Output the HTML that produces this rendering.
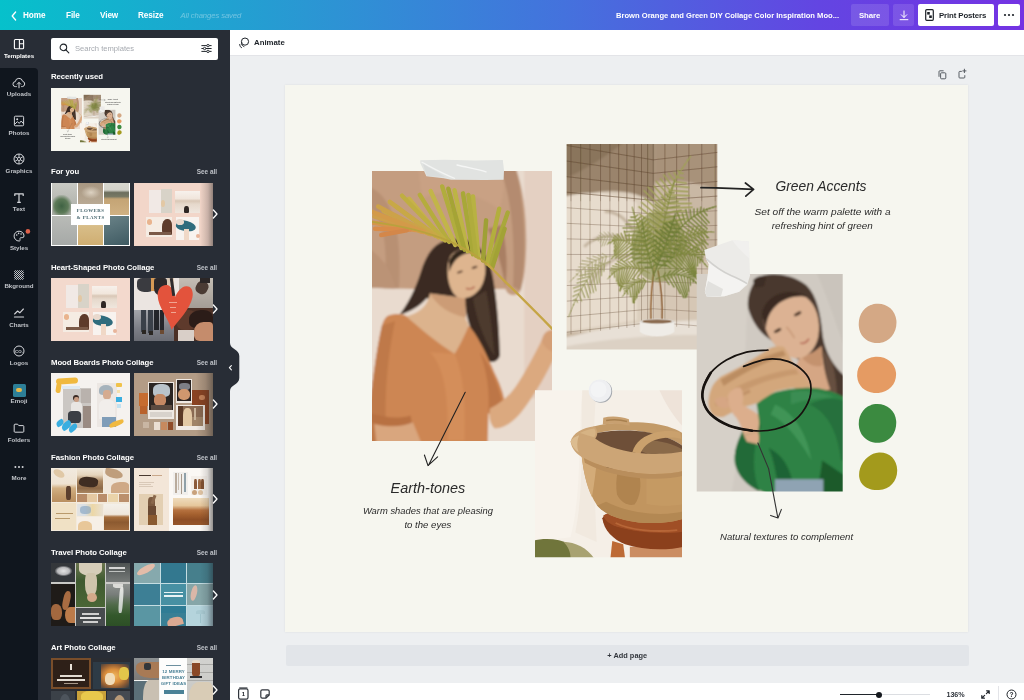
<!DOCTYPE html>
<html>
<head>
<meta charset="utf-8">
<title>Canva editor</title>
<style>
*{box-sizing:border-box;margin:0;padding:0}
html,body{width:1024px;height:700px;overflow:hidden;background:#edeff1;font-family:"Liberation Sans",sans-serif;}
.abs{position:absolute}
#hdr,#rail,#panel,#tool,#bot,#addp{will-change:transform}
#hdr{position:absolute;left:0;top:0;width:1024px;height:29.5px;background:linear-gradient(90deg,#06c1cb 0%,#2a97d3 30%,#4472dd 55%,#6345e2 80%,#7433e3 100%);}
#hdr .m{position:absolute;top:10px;font-size:8.2px;font-weight:bold;color:#fff;line-height:11px;white-space:nowrap;letter-spacing:-0.1px}
#rail{position:absolute;left:0;top:30px;width:38px;height:670px;background:#10161e;}
#rail .tab{position:absolute;left:0;width:38px;height:38px;text-align:center;}
#rail .lbl{position:absolute;left:-6px;width:50px;text-align:center;font-size:6.2px;font-weight:bold;color:#c3c6cb;line-height:8px;white-space:nowrap}
#rail svg{position:absolute;left:12px;width:14px;height:14px;overflow:visible}
#panel{position:absolute;left:38px;top:30px;width:192px;height:670px;background:#282d36;overflow:hidden}
.sect{position:absolute;left:13px;font-size:7.75px;font-weight:bold;color:#fff;line-height:10px;white-space:nowrap;letter-spacing:-0.05px}
.see{position:absolute;right:13px;font-size:6.4px;font-weight:bold;color:#bfc2c8;line-height:10px;white-space:nowrap}
.th{position:absolute;width:79px;height:63px;overflow:hidden;background:#ccc}
.th i{position:absolute;display:block}
.chev{position:absolute;left:172.8px;width:8px;height:10px}
#tool{position:absolute;left:230px;top:29.5px;width:794px;height:25.5px;background:#fff;border-bottom:1px solid #e3e4e8}
#page{position:absolute;left:285px;top:85px;width:683px;height:547px;background:#f6f6ef;box-shadow:0 0 2px rgba(0,0,0,.08)}
#addp{position:absolute;left:286px;top:645px;width:682.5px;height:20.6px;background:#e2e5e9;border-radius:2px;font-size:7.4px;font-weight:bold;color:#33373d;text-align:center;line-height:21.6px}
#bot{position:absolute;left:230px;top:682.5px;width:794px;height:17.5px;background:#fff;}
.hand{position:absolute;font-family:"Liberation Sans",sans-serif;font-style:italic;color:#2b2b2b;white-space:nowrap;text-align:center}
</style>
</head>
<body>
<svg width="0" height="0" style="position:absolute">
<defs>
<filter id="b1" x="-5%" y="-5%" width="110%" height="110%"><feGaussianBlur stdDeviation="1.1"/></filter>
<filter id="b2" x="-10%" y="-10%" width="120%" height="120%"><feGaussianBlur stdDeviation="2.2"/></filter>
<filter id="b3" x="-5%" y="-5%" width="110%" height="110%"><feGaussianBlur stdDeviation="3"/></filter>
<filter id="b1z" x="-5%" y="-5%" width="110%" height="110%"><feGaussianBlur stdDeviation="1.6"/></filter>
<filter id="b05" x="-5%" y="-5%" width="110%" height="110%"><feGaussianBlur stdDeviation=".45"/></filter>
<clipPath id="c1"><rect width="180" height="270"/></clipPath>
<clipPath id="ctop"><rect x="-5" y="-5" width="530" height="200"/></clipPath>
<clipPath id="c2"><rect width="150.7" height="205.6"/></clipPath>
<clipPath id="c3"><rect width="147" height="167"/></clipPath>
<clipPath id="c4"><rect width="146" height="217.4"/></clipPath>
<pattern id="tiles" width="9.2" height="9.2" patternUnits="userSpaceOnUse"><path d="M0 .5 H9.2 M.5 0 V9.2" stroke="#6e5643" stroke-width=".8" opacity=".75"/></pattern>
<pattern id="tilesR" width="7.2" height="9.2" patternUnits="userSpaceOnUse"><path d="M0 .5 H7.2 M.5 0 V9.2" stroke="#6e5643" stroke-width=".8" opacity=".7"/></pattern>
<pattern id="tilesZ" width="36" height="36" patternUnits="userSpaceOnUse"><path d="M0 8 H36 M20 0 V36" stroke="#6e5744" stroke-width="2.2" opacity=".75"/></pattern>
<pattern id="tilesZR" width="27" height="36" patternUnits="userSpaceOnUse"><path d="M0 8 H27 M10 0 V36" stroke="#6e5744" stroke-width="2.1" opacity=".7"/></pattern>
<symbol id="art" viewBox="0 0 683 547" overflow="visible">
<!--P2-->
<g transform="translate(281.6,59)" clip-path="url(#c2)">
<g transform="scale(.2926,.2937)">
<g filter="url(#b3)">
<rect x="-10" y="-10" width="540" height="720" fill="#c9b8a4"/>
<path d="M-10 -10 H300 V640 H-10Z" fill="#dccfbe"/>
<path d="M-10 -10 H300 V200 C220 150 120 150 -10 190Z" fill="#9a846c"/>
<path d="M-10 -10 H200 C140 40 60 90 -10 120Z" fill="#8a745c"/>
<path d="M-10 180 C60 160 150 160 240 200 L240 600 L-10 640Z" fill="#e7dccd"/>
<path d="M300 -10 H530 V160 C450 130 370 120 300 130Z" fill="#a8927a"/>
<path d="M300 400 H530 V620 H300Z" fill="#d6c7b5"/>
<path d="M-10 660 C80 640 180 615 250 610 L440 600 L530 600 V720 H-10Z" fill="#e8e0d6"/>
<path d="M-10 690 C100 670 250 650 440 650 L530 650 V720 H-10Z" fill="#dcd1c4"/>
<!-- wall shadows of fronds -->
<g stroke="#b9a892" stroke-width="10" fill="none" opacity=".8"><path d="M220 330 C160 300 100 310 60 350"/><path d="M220 380 C160 380 110 420 80 480"/><path d="M230 300 C200 250 170 230 130 230"/></g>
</g>
<g fill="none" stroke="#5f4732" stroke-width="2.6" filter="url(#b1z)"><path d="M0 5 L296 54 M0 58 L296 100 M0 111 L296 146 M0 164 L296 192 M0 217 L296 238 M0 270 L296 284 M0 323 L296 330 M0 376 L296 377 M0 429 L296 423 M0 482 L296 469 M0 535 L296 515 M0 588 L296 561 M0 641 L296 607 M15 -5 L15 648 M48 -5 L48 644 M80 -5 L80 641 M116 -5 L116 636 M148 -5 L148 632 M178 -5 L178 629 M206 -5 L206 626 M231 -5 L231 623 M256 -5 L256 620 M277 -5 L277 617 M296 -5 L296 615 " opacity=".44"/><path d="M296 54 L520 28 M296 100 L520 77 M296 146 L520 127 M296 192 L520 177 M296 238 L520 227 M296 284 L520 277 M296 330 L520 326 M296 377 L520 376 M296 423 L520 426 M296 469 L520 476 M296 515 L520 526 M296 561 L520 575 M296 607 L520 625 M336 -5 L336 618 M376 -5 L376 622 M418 -5 L418 626 M462 -5 L462 629 M508 -5 L508 633 " opacity=".4"/><path d="M0 5 L296 54 M0 58 L296 100 M0 111 L296 146 M0 164 L296 192 M0 217 L296 238 M0 270 L296 284 M0 323 L296 330 M0 376 L296 377 M0 429 L296 423 M0 482 L296 469 M0 535 L296 515 M0 588 L296 561 M0 641 L296 607 M15 -5 L15 648 M48 -5 L48 644 M80 -5 L80 641 M116 -5 L116 636 M148 -5 L148 632 M178 -5 L178 629 M206 -5 L206 626 M231 -5 L231 623 M256 -5 L256 620 M277 -5 L277 617 M296 -5 L296 615 " opacity=".35" clip-path="url(#ctop)"/><path d="M296 54 L520 28 M296 100 L520 77 M296 146 L520 127 M296 192 L520 177 M296 238 L520 227 M296 284 L520 277 M296 330 L520 326 M296 377 L520 376 M296 423 L520 426 M296 469 L520 476 M296 515 L520 526 M296 561 L520 575 M296 607 L520 625 M336 -5 L336 618 M376 -5 L376 622 M418 -5 L418 626 M462 -5 L462 629 M508 -5 L508 633 " opacity=".3" clip-path="url(#ctop)"/></g>
<g filter="url(#b1z)">
<path d="M288 600 C286 540 290 480 300 420" stroke="#96683c" stroke-width="5" fill="none"/>
<path d="M326 600 C328 540 322 480 312 430" stroke="#8c6038" stroke-width="5" fill="none"/>
<ellipse cx="315" cy="350" rx="95" ry="120" fill="#7e863c" opacity=".5"/>
<path d="M150 400 Q70 420 6 590" stroke="#9a9a60" stroke-width="2.8800000000000003" fill="none"/><path d="M129 408 L112 405" stroke="#9a9a60" stroke-width="3.6" stroke-linecap="round"/><path d="M129 408 L127 434" stroke="#9a9a60" stroke-width="3.6" stroke-linecap="round"/><path d="M119 414 L95 412" stroke="#9a9a60" stroke-width="3.6" stroke-linecap="round"/><path d="M119 414 L119 448" stroke="#9a9a60" stroke-width="3.6" stroke-linecap="round"/><path d="M108 421 L72 422" stroke="#9a9a60" stroke-width="3.6" stroke-linecap="round"/><path d="M108 421 L112 473" stroke="#9a9a60" stroke-width="3.6" stroke-linecap="round"/><path d="M98 430 L65 434" stroke="#9a9a60" stroke-width="3.6" stroke-linecap="round"/><path d="M98 430 L105 476" stroke="#9a9a60" stroke-width="3.6" stroke-linecap="round"/><path d="M89 440 L44 448" stroke="#9a9a60" stroke-width="3.6" stroke-linecap="round"/><path d="M89 440 L100 499" stroke="#9a9a60" stroke-width="3.6" stroke-linecap="round"/><path d="M79 451 L37 461" stroke="#9a9a60" stroke-width="3.6" stroke-linecap="round"/><path d="M79 451 L92 506" stroke="#9a9a60" stroke-width="3.6" stroke-linecap="round"/><path d="M69 464 L35 474" stroke="#9a9a60" stroke-width="3.6" stroke-linecap="round"/><path d="M69 464 L82 508" stroke="#9a9a60" stroke-width="3.6" stroke-linecap="round"/><path d="M60 478 L23 491" stroke="#9a9a60" stroke-width="3.6" stroke-linecap="round"/><path d="M60 478 L75 524" stroke="#9a9a60" stroke-width="3.6" stroke-linecap="round"/><path d="M50 493 L26 503" stroke="#9a9a60" stroke-width="3.6" stroke-linecap="round"/><path d="M50 493 L62 523" stroke="#9a9a60" stroke-width="3.6" stroke-linecap="round"/><path d="M41 510 L21 519" stroke="#9a9a60" stroke-width="3.6" stroke-linecap="round"/><path d="M41 510 L51 535" stroke="#9a9a60" stroke-width="3.6" stroke-linecap="round"/><path d="M32 528 L23 532" stroke="#9a9a60" stroke-width="3.6" stroke-linecap="round"/><path d="M32 528 L37 539" stroke="#9a9a60" stroke-width="3.6" stroke-linecap="round"/><path d="M23 547 L23 548" stroke="#9a9a60" stroke-width="3.6" stroke-linecap="round"/><path d="M23 547 L24 548" stroke="#9a9a60" stroke-width="3.6" stroke-linecap="round"/><path d="M15 568 L15 568" stroke="#9a9a60" stroke-width="3.6" stroke-linecap="round"/><path d="M15 568 L15 568" stroke="#9a9a60" stroke-width="3.6" stroke-linecap="round"/><path d="M160 380 Q90 380 10 470" stroke="#a6a072" stroke-width="2.5600000000000005" fill="none"/><path d="M136 382 L121 373" stroke="#a6a072" stroke-width="3.2" stroke-linecap="round"/><path d="M136 382 L128 410" stroke="#a6a072" stroke-width="3.2" stroke-linecap="round"/><path d="M124 386 L107 378" stroke="#a6a072" stroke-width="3.2" stroke-linecap="round"/><path d="M124 386 L118 415" stroke="#a6a072" stroke-width="3.2" stroke-linecap="round"/><path d="M112 390 L89 382" stroke="#a6a072" stroke-width="3.2" stroke-linecap="round"/><path d="M112 390 L107 427" stroke="#a6a072" stroke-width="3.2" stroke-linecap="round"/><path d="M100 396 L69 388" stroke="#a6a072" stroke-width="3.2" stroke-linecap="round"/><path d="M100 396 L96 442" stroke="#a6a072" stroke-width="3.2" stroke-linecap="round"/><path d="M88 402 L52 397" stroke="#a6a072" stroke-width="3.2" stroke-linecap="round"/><path d="M88 402 L86 454" stroke="#a6a072" stroke-width="3.2" stroke-linecap="round"/><path d="M75 411 L47 408" stroke="#a6a072" stroke-width="3.2" stroke-linecap="round"/><path d="M75 411 L76 450" stroke="#a6a072" stroke-width="3.2" stroke-linecap="round"/><path d="M62 420 L41 419" stroke="#a6a072" stroke-width="3.2" stroke-linecap="round"/><path d="M62 420 L64 449" stroke="#a6a072" stroke-width="3.2" stroke-linecap="round"/><path d="M49 431 L33 431" stroke="#a6a072" stroke-width="3.2" stroke-linecap="round"/><path d="M49 431 L52 453" stroke="#a6a072" stroke-width="3.2" stroke-linecap="round"/><path d="M36 442 L33 443" stroke="#a6a072" stroke-width="3.2" stroke-linecap="round"/><path d="M36 442 L37 447" stroke="#a6a072" stroke-width="3.2" stroke-linecap="round"/><path d="M23 456 L23 456" stroke="#a6a072" stroke-width="3.2" stroke-linecap="round"/><path d="M23 456 L23 456" stroke="#a6a072" stroke-width="3.2" stroke-linecap="round"/><path d="M200 330 Q140 300 90 330" stroke="#a9a47a" stroke-width="2.4000000000000004" fill="none"/><path d="M176 320 L171 308" stroke="#a9a47a" stroke-width="3" stroke-linecap="round"/><path d="M176 320 L162 338" stroke="#a9a47a" stroke-width="3" stroke-linecap="round"/><path d="M165 317 L157 303" stroke="#a9a47a" stroke-width="3" stroke-linecap="round"/><path d="M165 317 L149 341" stroke="#a9a47a" stroke-width="3" stroke-linecap="round"/><path d="M154 316 L142 300" stroke="#a9a47a" stroke-width="3" stroke-linecap="round"/><path d="M154 316 L138 343" stroke="#a9a47a" stroke-width="3" stroke-linecap="round"/><path d="M142 315 L128 300" stroke="#a9a47a" stroke-width="3" stroke-linecap="round"/><path d="M142 315 L128 346" stroke="#a9a47a" stroke-width="3" stroke-linecap="round"/><path d="M132 316 L114 302" stroke="#a9a47a" stroke-width="3" stroke-linecap="round"/><path d="M132 316 L119 349" stroke="#a9a47a" stroke-width="3" stroke-linecap="round"/><path d="M121 317 L110 311" stroke="#a9a47a" stroke-width="3" stroke-linecap="round"/><path d="M121 317 L116 336" stroke="#a9a47a" stroke-width="3" stroke-linecap="round"/><path d="M110 320 L104 318" stroke="#a9a47a" stroke-width="3" stroke-linecap="round"/><path d="M110 320 L109 330" stroke="#a9a47a" stroke-width="3" stroke-linecap="round"/><path d="M100 325 L100 325" stroke="#a9a47a" stroke-width="3" stroke-linecap="round"/><path d="M100 325 L100 325" stroke="#a9a47a" stroke-width="3" stroke-linecap="round"/><path d="M300 430 Q290 220 425 40" stroke="#a0a05a" stroke-width="4.0" fill="none"/><path d="M299 397 L322 388" stroke="#a0a05a" stroke-width="5" stroke-linecap="round"/><path d="M299 397 L277 387" stroke="#a0a05a" stroke-width="5" stroke-linecap="round"/><path d="M300 380 L335 367" stroke="#a0a05a" stroke-width="5" stroke-linecap="round"/><path d="M300 380 L266 364" stroke="#a0a05a" stroke-width="5" stroke-linecap="round"/><path d="M301 364 L339 351" stroke="#a0a05a" stroke-width="5" stroke-linecap="round"/><path d="M301 364 L265 346" stroke="#a0a05a" stroke-width="5" stroke-linecap="round"/><path d="M302 347 L349 333" stroke="#a0a05a" stroke-width="5" stroke-linecap="round"/><path d="M302 347 L260 325" stroke="#a0a05a" stroke-width="5" stroke-linecap="round"/><path d="M304 331 L362 315" stroke="#a0a05a" stroke-width="5" stroke-linecap="round"/><path d="M304 331 L253 302" stroke="#a0a05a" stroke-width="5" stroke-linecap="round"/><path d="M306 315 L386 296" stroke="#a0a05a" stroke-width="5" stroke-linecap="round"/><path d="M306 315 L240 274" stroke="#a0a05a" stroke-width="5" stroke-linecap="round"/><path d="M308 299 L388 283" stroke="#a0a05a" stroke-width="5" stroke-linecap="round"/><path d="M308 299 L245 257" stroke="#a0a05a" stroke-width="5" stroke-linecap="round"/><path d="M312 283 L393 269" stroke="#a0a05a" stroke-width="5" stroke-linecap="round"/><path d="M312 283 L250 239" stroke="#a0a05a" stroke-width="5" stroke-linecap="round"/><path d="M315 267 L409 254" stroke="#a0a05a" stroke-width="5" stroke-linecap="round"/><path d="M315 267 L247 214" stroke="#a0a05a" stroke-width="5" stroke-linecap="round"/><path d="M319 251 L410 241" stroke="#a0a05a" stroke-width="5" stroke-linecap="round"/><path d="M319 251 L256 199" stroke="#a0a05a" stroke-width="5" stroke-linecap="round"/><path d="M324 235 L409 228" stroke="#a0a05a" stroke-width="5" stroke-linecap="round"/><path d="M324 235 L267 185" stroke="#a0a05a" stroke-width="5" stroke-linecap="round"/><path d="M329 220 L429 215" stroke="#a0a05a" stroke-width="5" stroke-linecap="round"/><path d="M329 220 L264 159" stroke="#a0a05a" stroke-width="5" stroke-linecap="round"/><path d="M334 204 L426 202" stroke="#a0a05a" stroke-width="5" stroke-linecap="round"/><path d="M334 204 L278 147" stroke="#a0a05a" stroke-width="5" stroke-linecap="round"/><path d="M340 189 L411 189" stroke="#a0a05a" stroke-width="5" stroke-linecap="round"/><path d="M340 189 L299 144" stroke="#a0a05a" stroke-width="5" stroke-linecap="round"/><path d="M347 173 L419 176" stroke="#a0a05a" stroke-width="5" stroke-linecap="round"/><path d="M347 173 L306 127" stroke="#a0a05a" stroke-width="5" stroke-linecap="round"/><path d="M353 158 L415 162" stroke="#a0a05a" stroke-width="5" stroke-linecap="round"/><path d="M353 158 L320 118" stroke="#a0a05a" stroke-width="5" stroke-linecap="round"/><path d="M361 143 L418 148" stroke="#a0a05a" stroke-width="5" stroke-linecap="round"/><path d="M361 143 L332 105" stroke="#a0a05a" stroke-width="5" stroke-linecap="round"/><path d="M369 128 L409 133" stroke="#a0a05a" stroke-width="5" stroke-linecap="round"/><path d="M369 128 L349 100" stroke="#a0a05a" stroke-width="5" stroke-linecap="round"/><path d="M377 113 L399 116" stroke="#a0a05a" stroke-width="5" stroke-linecap="round"/><path d="M377 113 L367 98" stroke="#a0a05a" stroke-width="5" stroke-linecap="round"/><path d="M386 98 L398 100" stroke="#a0a05a" stroke-width="5" stroke-linecap="round"/><path d="M386 98 L380 90" stroke="#a0a05a" stroke-width="5" stroke-linecap="round"/><path d="M395 84 L395 84" stroke="#a0a05a" stroke-width="5" stroke-linecap="round"/><path d="M395 84 L395 84" stroke="#a0a05a" stroke-width="5" stroke-linecap="round"/><path d="M404 69 L404 69" stroke="#a0a05a" stroke-width="5" stroke-linecap="round"/><path d="M404 69 L404 69" stroke="#a0a05a" stroke-width="5" stroke-linecap="round"/><path d="M414 54 L414 54" stroke="#a0a05a" stroke-width="5" stroke-linecap="round"/><path d="M414 54 L414 54" stroke="#a0a05a" stroke-width="5" stroke-linecap="round"/><path d="M305 420 Q330 250 370 120" stroke="#878c44" stroke-width="3.5200000000000005" fill="none"/><path d="M311 381 L331 376" stroke="#878c44" stroke-width="4.4" stroke-linecap="round"/><path d="M311 381 L295 370" stroke="#878c44" stroke-width="4.4" stroke-linecap="round"/><path d="M314 361 L347 354" stroke="#878c44" stroke-width="4.4" stroke-linecap="round"/><path d="M314 361 L288 344" stroke="#878c44" stroke-width="4.4" stroke-linecap="round"/><path d="M318 342 L352 335" stroke="#878c44" stroke-width="4.4" stroke-linecap="round"/><path d="M318 342 L290 324" stroke="#878c44" stroke-width="4.4" stroke-linecap="round"/><path d="M321 323 L373 313" stroke="#878c44" stroke-width="4.4" stroke-linecap="round"/><path d="M321 323 L280 296" stroke="#878c44" stroke-width="4.4" stroke-linecap="round"/><path d="M325 305 L384 294" stroke="#878c44" stroke-width="4.4" stroke-linecap="round"/><path d="M325 305 L278 273" stroke="#878c44" stroke-width="4.4" stroke-linecap="round"/><path d="M328 287 L386 276" stroke="#878c44" stroke-width="4.4" stroke-linecap="round"/><path d="M328 287 L284 256" stroke="#878c44" stroke-width="4.4" stroke-linecap="round"/><path d="M332 269 L397 258" stroke="#878c44" stroke-width="4.4" stroke-linecap="round"/><path d="M332 269 L283 234" stroke="#878c44" stroke-width="4.4" stroke-linecap="round"/><path d="M336 251 L385 243" stroke="#878c44" stroke-width="4.4" stroke-linecap="round"/><path d="M336 251 L298 224" stroke="#878c44" stroke-width="4.4" stroke-linecap="round"/><path d="M340 234 L392 226" stroke="#878c44" stroke-width="4.4" stroke-linecap="round"/><path d="M340 234 L301 205" stroke="#878c44" stroke-width="4.4" stroke-linecap="round"/><path d="M344 217 L386 211" stroke="#878c44" stroke-width="4.4" stroke-linecap="round"/><path d="M344 217 L312 193" stroke="#878c44" stroke-width="4.4" stroke-linecap="round"/><path d="M348 200 L381 196" stroke="#878c44" stroke-width="4.4" stroke-linecap="round"/><path d="M348 200 L324 181" stroke="#878c44" stroke-width="4.4" stroke-linecap="round"/><path d="M352 183 L373 181" stroke="#878c44" stroke-width="4.4" stroke-linecap="round"/><path d="M352 183 L337 171" stroke="#878c44" stroke-width="4.4" stroke-linecap="round"/><path d="M356 167 L367 166" stroke="#878c44" stroke-width="4.4" stroke-linecap="round"/><path d="M356 167 L349 161" stroke="#878c44" stroke-width="4.4" stroke-linecap="round"/><path d="M361 151 L361 151" stroke="#878c44" stroke-width="4.4" stroke-linecap="round"/><path d="M361 151 L361 151" stroke="#878c44" stroke-width="4.4" stroke-linecap="round"/><path d="M365 135 L365 135" stroke="#878c44" stroke-width="4.4" stroke-linecap="round"/><path d="M365 135 L365 135" stroke="#878c44" stroke-width="4.4" stroke-linecap="round"/><path d="M310 400 Q390 240 512 212" stroke="#7a8440" stroke-width="3.6799999999999997" fill="none"/><path d="M326 371 L356 384" stroke="#7a8440" stroke-width="4.6" stroke-linecap="round"/><path d="M326 371 L312 359" stroke="#7a8440" stroke-width="4.6" stroke-linecap="round"/><path d="M334 357 L368 373" stroke="#7a8440" stroke-width="4.6" stroke-linecap="round"/><path d="M334 357 L319 343" stroke="#7a8440" stroke-width="4.6" stroke-linecap="round"/><path d="M342 344 L400 373" stroke="#7a8440" stroke-width="4.6" stroke-linecap="round"/><path d="M342 344 L318 319" stroke="#7a8440" stroke-width="4.6" stroke-linecap="round"/><path d="M350 331 L419 367" stroke="#7a8440" stroke-width="4.6" stroke-linecap="round"/><path d="M350 331 L325 302" stroke="#7a8440" stroke-width="4.6" stroke-linecap="round"/><path d="M359 319 L446 369" stroke="#7a8440" stroke-width="4.6" stroke-linecap="round"/><path d="M359 319 L329 280" stroke="#7a8440" stroke-width="4.6" stroke-linecap="round"/><path d="M368 308 L457 362" stroke="#7a8440" stroke-width="4.6" stroke-linecap="round"/><path d="M368 308 L340 267" stroke="#7a8440" stroke-width="4.6" stroke-linecap="round"/><path d="M377 297 L453 346" stroke="#7a8440" stroke-width="4.6" stroke-linecap="round"/><path d="M377 297 L356 262" stroke="#7a8440" stroke-width="4.6" stroke-linecap="round"/><path d="M386 287 L466 342" stroke="#7a8440" stroke-width="4.6" stroke-linecap="round"/><path d="M386 287 L367 248" stroke="#7a8440" stroke-width="4.6" stroke-linecap="round"/><path d="M396 278 L483 342" stroke="#7a8440" stroke-width="4.6" stroke-linecap="round"/><path d="M396 278 L378 234" stroke="#7a8440" stroke-width="4.6" stroke-linecap="round"/><path d="M405 269 L468 318" stroke="#7a8440" stroke-width="4.6" stroke-linecap="round"/><path d="M405 269 L395 236" stroke="#7a8440" stroke-width="4.6" stroke-linecap="round"/><path d="M415 260 L485 319" stroke="#7a8440" stroke-width="4.6" stroke-linecap="round"/><path d="M415 260 L407 223" stroke="#7a8440" stroke-width="4.6" stroke-linecap="round"/><path d="M425 252 L479 302" stroke="#7a8440" stroke-width="4.6" stroke-linecap="round"/><path d="M425 252 L422 223" stroke="#7a8440" stroke-width="4.6" stroke-linecap="round"/><path d="M435 245 L480 288" stroke="#7a8440" stroke-width="4.6" stroke-linecap="round"/><path d="M435 245 L435 221" stroke="#7a8440" stroke-width="4.6" stroke-linecap="round"/><path d="M446 239 L479 274" stroke="#7a8440" stroke-width="4.6" stroke-linecap="round"/><path d="M446 239 L447 220" stroke="#7a8440" stroke-width="4.6" stroke-linecap="round"/><path d="M456 233 L487 268" stroke="#7a8440" stroke-width="4.6" stroke-linecap="round"/><path d="M456 233 L459 215" stroke="#7a8440" stroke-width="4.6" stroke-linecap="round"/><path d="M467 227 L480 243" stroke="#7a8440" stroke-width="4.6" stroke-linecap="round"/><path d="M467 227 L469 220" stroke="#7a8440" stroke-width="4.6" stroke-linecap="round"/><path d="M478 223 L481 226" stroke="#7a8440" stroke-width="4.6" stroke-linecap="round"/><path d="M478 223 L479 221" stroke="#7a8440" stroke-width="4.6" stroke-linecap="round"/><path d="M489 219 L489 219" stroke="#7a8440" stroke-width="4.6" stroke-linecap="round"/><path d="M489 219 L489 219" stroke="#7a8440" stroke-width="4.6" stroke-linecap="round"/><path d="M500 215 L500 215" stroke="#7a8440" stroke-width="4.6" stroke-linecap="round"/><path d="M500 215 L500 215" stroke="#7a8440" stroke-width="4.6" stroke-linecap="round"/><path d="M310 430 Q410 320 482 420" stroke="#7c863e" stroke-width="3.5200000000000005" fill="none"/><path d="M333 407 L355 423" stroke="#7c863e" stroke-width="4.4" stroke-linecap="round"/><path d="M333 407 L330 395" stroke="#7c863e" stroke-width="4.4" stroke-linecap="round"/><path d="M344 398 L381 428" stroke="#7c863e" stroke-width="4.4" stroke-linecap="round"/><path d="M344 398 L341 376" stroke="#7c863e" stroke-width="4.4" stroke-linecap="round"/><path d="M356 390 L402 434" stroke="#7c863e" stroke-width="4.4" stroke-linecap="round"/><path d="M356 390 L355 361" stroke="#7c863e" stroke-width="4.4" stroke-linecap="round"/><path d="M366 383 L425 446" stroke="#7c863e" stroke-width="4.4" stroke-linecap="round"/><path d="M366 383 L372 346" stroke="#7c863e" stroke-width="4.4" stroke-linecap="round"/><path d="M377 379 L436 452" stroke="#7c863e" stroke-width="4.4" stroke-linecap="round"/><path d="M377 379 L391 340" stroke="#7c863e" stroke-width="4.4" stroke-linecap="round"/><path d="M388 375 L444 460" stroke="#7c863e" stroke-width="4.4" stroke-linecap="round"/><path d="M388 375 L411 336" stroke="#7c863e" stroke-width="4.4" stroke-linecap="round"/><path d="M398 373 L437 446" stroke="#7c863e" stroke-width="4.4" stroke-linecap="round"/><path d="M398 373 L424 345" stroke="#7c863e" stroke-width="4.4" stroke-linecap="round"/><path d="M408 372 L440 451" stroke="#7c863e" stroke-width="4.4" stroke-linecap="round"/><path d="M408 372 L442 349" stroke="#7c863e" stroke-width="4.4" stroke-linecap="round"/><path d="M418 373 L440 446" stroke="#7c863e" stroke-width="4.4" stroke-linecap="round"/><path d="M418 373 L454 357" stroke="#7c863e" stroke-width="4.4" stroke-linecap="round"/><path d="M428 376 L442 454" stroke="#7c863e" stroke-width="4.4" stroke-linecap="round"/><path d="M428 376 L470 365" stroke="#7c863e" stroke-width="4.4" stroke-linecap="round"/><path d="M437 379 L443 443" stroke="#7c863e" stroke-width="4.4" stroke-linecap="round"/><path d="M437 379 L475 376" stroke="#7c863e" stroke-width="4.4" stroke-linecap="round"/><path d="M447 385 L447 415" stroke="#7c863e" stroke-width="4.4" stroke-linecap="round"/><path d="M447 385 L466 385" stroke="#7c863e" stroke-width="4.4" stroke-linecap="round"/><path d="M456 391 L455 405" stroke="#7c863e" stroke-width="4.4" stroke-linecap="round"/><path d="M456 391 L465 393" stroke="#7c863e" stroke-width="4.4" stroke-linecap="round"/><path d="M465 399 L465 399" stroke="#7c863e" stroke-width="4.4" stroke-linecap="round"/><path d="M465 399 L465 399" stroke="#7c863e" stroke-width="4.4" stroke-linecap="round"/><path d="M473 409 L473 409" stroke="#7c863e" stroke-width="4.4" stroke-linecap="round"/><path d="M473 409 L473 409" stroke="#7c863e" stroke-width="4.4" stroke-linecap="round"/><path d="M295 400 Q245 300 224 214" stroke="#878c46" stroke-width="3.5200000000000005" fill="none"/><path d="M282 374 L296 358" stroke="#878c46" stroke-width="4.4" stroke-linecap="round"/><path d="M282 374 L256 377" stroke="#878c46" stroke-width="4.4" stroke-linecap="round"/><path d="M276 361 L297 337" stroke="#878c46" stroke-width="4.4" stroke-linecap="round"/><path d="M276 361 L238 364" stroke="#878c46" stroke-width="4.4" stroke-linecap="round"/><path d="M270 348 L294 323" stroke="#878c46" stroke-width="4.4" stroke-linecap="round"/><path d="M270 348 L229 351" stroke="#878c46" stroke-width="4.4" stroke-linecap="round"/><path d="M265 335 L289 310" stroke="#878c46" stroke-width="4.4" stroke-linecap="round"/><path d="M265 335 L223 338" stroke="#878c46" stroke-width="4.4" stroke-linecap="round"/><path d="M260 322 L291 291" stroke="#878c46" stroke-width="4.4" stroke-linecap="round"/><path d="M260 322 L206 326" stroke="#878c46" stroke-width="4.4" stroke-linecap="round"/><path d="M255 310 L286 280" stroke="#878c46" stroke-width="4.4" stroke-linecap="round"/><path d="M255 310 L202 312" stroke="#878c46" stroke-width="4.4" stroke-linecap="round"/><path d="M250 297 L282 267" stroke="#878c46" stroke-width="4.4" stroke-linecap="round"/><path d="M250 297 L197 299" stroke="#878c46" stroke-width="4.4" stroke-linecap="round"/><path d="M245 285 L279 255" stroke="#878c46" stroke-width="4.4" stroke-linecap="round"/><path d="M245 285 L192 286" stroke="#878c46" stroke-width="4.4" stroke-linecap="round"/><path d="M241 273 L267 251" stroke="#878c46" stroke-width="4.4" stroke-linecap="round"/><path d="M241 273 L202 273" stroke="#878c46" stroke-width="4.4" stroke-linecap="round"/><path d="M237 261 L254 247" stroke="#878c46" stroke-width="4.4" stroke-linecap="round"/><path d="M237 261 L211 260" stroke="#878c46" stroke-width="4.4" stroke-linecap="round"/><path d="M234 249 L243 241" stroke="#878c46" stroke-width="4.4" stroke-linecap="round"/><path d="M234 249 L219 249" stroke="#878c46" stroke-width="4.4" stroke-linecap="round"/><path d="M230 237 L231 237" stroke="#878c46" stroke-width="4.4" stroke-linecap="round"/><path d="M230 237 L230 237" stroke="#878c46" stroke-width="4.4" stroke-linecap="round"/><path d="M227 226 L227 226" stroke="#878c46" stroke-width="4.4" stroke-linecap="round"/><path d="M227 226 L227 226" stroke="#878c46" stroke-width="4.4" stroke-linecap="round"/><path d="M290 420 Q205 290 140 340" stroke="#8e914c" stroke-width="3.3600000000000003" fill="none"/><path d="M270 392 L280 376" stroke="#8e914c" stroke-width="4.2" stroke-linecap="round"/><path d="M270 392 L240 406" stroke="#8e914c" stroke-width="4.2" stroke-linecap="round"/><path d="M261 380 L273 356" stroke="#8e914c" stroke-width="4.2" stroke-linecap="round"/><path d="M261 380 L219 401" stroke="#8e914c" stroke-width="4.2" stroke-linecap="round"/><path d="M251 369 L265 338" stroke="#8e914c" stroke-width="4.2" stroke-linecap="round"/><path d="M251 369 L198 399" stroke="#8e914c" stroke-width="4.2" stroke-linecap="round"/><path d="M242 359 L254 323" stroke="#8e914c" stroke-width="4.2" stroke-linecap="round"/><path d="M242 359 L182 397" stroke="#8e914c" stroke-width="4.2" stroke-linecap="round"/><path d="M232 351 L240 316" stroke="#8e914c" stroke-width="4.2" stroke-linecap="round"/><path d="M232 351 L177 390" stroke="#8e914c" stroke-width="4.2" stroke-linecap="round"/><path d="M223 343 L227 307" stroke="#8e914c" stroke-width="4.2" stroke-linecap="round"/><path d="M223 343 L167 389" stroke="#8e914c" stroke-width="4.2" stroke-linecap="round"/><path d="M214 338 L213 306" stroke="#8e914c" stroke-width="4.2" stroke-linecap="round"/><path d="M214 338 L167 381" stroke="#8e914c" stroke-width="4.2" stroke-linecap="round"/><path d="M206 333 L197 296" stroke="#8e914c" stroke-width="4.2" stroke-linecap="round"/><path d="M206 333 L153 391" stroke="#8e914c" stroke-width="4.2" stroke-linecap="round"/><path d="M197 329 L186 304" stroke="#8e914c" stroke-width="4.2" stroke-linecap="round"/><path d="M197 329 L163 374" stroke="#8e914c" stroke-width="4.2" stroke-linecap="round"/><path d="M188 327 L174 307" stroke="#8e914c" stroke-width="4.2" stroke-linecap="round"/><path d="M188 327 L163 369" stroke="#8e914c" stroke-width="4.2" stroke-linecap="round"/><path d="M180 326 L164 312" stroke="#8e914c" stroke-width="4.2" stroke-linecap="round"/><path d="M180 326 L162 364" stroke="#8e914c" stroke-width="4.2" stroke-linecap="round"/><path d="M172 326 L159 319" stroke="#8e914c" stroke-width="4.2" stroke-linecap="round"/><path d="M172 326 L163 352" stroke="#8e914c" stroke-width="4.2" stroke-linecap="round"/><path d="M164 328 L156 325" stroke="#8e914c" stroke-width="4.2" stroke-linecap="round"/><path d="M164 328 L161 341" stroke="#8e914c" stroke-width="4.2" stroke-linecap="round"/><path d="M156 331 L156 331" stroke="#8e914c" stroke-width="4.2" stroke-linecap="round"/><path d="M156 331 L156 331" stroke="#8e914c" stroke-width="4.2" stroke-linecap="round"/><path d="M148 335 L148 335" stroke="#8e914c" stroke-width="4.2" stroke-linecap="round"/><path d="M148 335 L148 335" stroke="#8e914c" stroke-width="4.2" stroke-linecap="round"/><path d="M285 440 Q195 390 140 460" stroke="#8c8f4a" stroke-width="3.3600000000000003" fill="none"/><path d="M262 429 L257 417" stroke="#8c8f4a" stroke-width="4.2" stroke-linecap="round"/><path d="M262 429 L243 452" stroke="#8c8f4a" stroke-width="4.2" stroke-linecap="round"/><path d="M250 425 L242 408" stroke="#8c8f4a" stroke-width="4.2" stroke-linecap="round"/><path d="M250 425 L226 459" stroke="#8c8f4a" stroke-width="4.2" stroke-linecap="round"/><path d="M239 422 L224 400" stroke="#8c8f4a" stroke-width="4.2" stroke-linecap="round"/><path d="M239 422 L208 472" stroke="#8c8f4a" stroke-width="4.2" stroke-linecap="round"/><path d="M229 420 L210 400" stroke="#8c8f4a" stroke-width="4.2" stroke-linecap="round"/><path d="M229 420 L201 472" stroke="#8c8f4a" stroke-width="4.2" stroke-linecap="round"/><path d="M219 419 L185 393" stroke="#8c8f4a" stroke-width="4.2" stroke-linecap="round"/><path d="M219 419 L182 501" stroke="#8c8f4a" stroke-width="4.2" stroke-linecap="round"/><path d="M209 419 L173 399" stroke="#8c8f4a" stroke-width="4.2" stroke-linecap="round"/><path d="M209 419 L181 498" stroke="#8c8f4a" stroke-width="4.2" stroke-linecap="round"/><path d="M199 421 L167 408" stroke="#8c8f4a" stroke-width="4.2" stroke-linecap="round"/><path d="M199 421 L182 484" stroke="#8c8f4a" stroke-width="4.2" stroke-linecap="round"/><path d="M190 423 L157 415" stroke="#8c8f4a" stroke-width="4.2" stroke-linecap="round"/><path d="M190 423 L179 483" stroke="#8c8f4a" stroke-width="4.2" stroke-linecap="round"/><path d="M181 427 L151 423" stroke="#8c8f4a" stroke-width="4.2" stroke-linecap="round"/><path d="M181 427 L175 478" stroke="#8c8f4a" stroke-width="4.2" stroke-linecap="round"/><path d="M172 431 L149 431" stroke="#8c8f4a" stroke-width="4.2" stroke-linecap="round"/><path d="M172 431 L171 468" stroke="#8c8f4a" stroke-width="4.2" stroke-linecap="round"/><path d="M163 437 L152 438" stroke="#8c8f4a" stroke-width="4.2" stroke-linecap="round"/><path d="M163 437 L164 454" stroke="#8c8f4a" stroke-width="4.2" stroke-linecap="round"/><path d="M155 443 L155 444" stroke="#8c8f4a" stroke-width="4.2" stroke-linecap="round"/><path d="M155 443 L155 444" stroke="#8c8f4a" stroke-width="4.2" stroke-linecap="round"/><path d="M147 451 L147 451" stroke="#8c8f4a" stroke-width="4.2" stroke-linecap="round"/><path d="M147 451 L147 451" stroke="#8c8f4a" stroke-width="4.2" stroke-linecap="round"/><path d="M300 440 Q345 330 372 235" stroke="#6c7a36" stroke-width="3.84" fill="none"/><path d="M312 411 L340 414" stroke="#6c7a36" stroke-width="4.8" stroke-linecap="round"/><path d="M312 411 L295 396" stroke="#6c7a36" stroke-width="4.8" stroke-linecap="round"/><path d="M317 397 L358 400" stroke="#6c7a36" stroke-width="4.8" stroke-linecap="round"/><path d="M317 397 L293 375" stroke="#6c7a36" stroke-width="4.8" stroke-linecap="round"/><path d="M323 382 L365 386" stroke="#6c7a36" stroke-width="4.8" stroke-linecap="round"/><path d="M323 382 L297 360" stroke="#6c7a36" stroke-width="4.8" stroke-linecap="round"/><path d="M328 368 L376 372" stroke="#6c7a36" stroke-width="4.8" stroke-linecap="round"/><path d="M328 368 L299 343" stroke="#6c7a36" stroke-width="4.8" stroke-linecap="round"/><path d="M333 354 L390 359" stroke="#6c7a36" stroke-width="4.8" stroke-linecap="round"/><path d="M333 354 L298 325" stroke="#6c7a36" stroke-width="4.8" stroke-linecap="round"/><path d="M338 341 L393 344" stroke="#6c7a36" stroke-width="4.8" stroke-linecap="round"/><path d="M338 341 L304 313" stroke="#6c7a36" stroke-width="4.8" stroke-linecap="round"/><path d="M343 327 L408 331" stroke="#6c7a36" stroke-width="4.8" stroke-linecap="round"/><path d="M343 327 L302 294" stroke="#6c7a36" stroke-width="4.8" stroke-linecap="round"/><path d="M348 313 L391 316" stroke="#6c7a36" stroke-width="4.8" stroke-linecap="round"/><path d="M348 313 L320 292" stroke="#6c7a36" stroke-width="4.8" stroke-linecap="round"/><path d="M352 300 L385 301" stroke="#6c7a36" stroke-width="4.8" stroke-linecap="round"/><path d="M352 300 L331 284" stroke="#6c7a36" stroke-width="4.8" stroke-linecap="round"/><path d="M356 287 L390 288" stroke="#6c7a36" stroke-width="4.8" stroke-linecap="round"/><path d="M356 287 L334 270" stroke="#6c7a36" stroke-width="4.8" stroke-linecap="round"/><path d="M360 274 L376 274" stroke="#6c7a36" stroke-width="4.8" stroke-linecap="round"/><path d="M360 274 L350 266" stroke="#6c7a36" stroke-width="4.8" stroke-linecap="round"/><path d="M364 261 L365 261" stroke="#6c7a36" stroke-width="4.8" stroke-linecap="round"/><path d="M364 261 L364 260" stroke="#6c7a36" stroke-width="4.8" stroke-linecap="round"/><path d="M368 248 L368 248" stroke="#6c7a36" stroke-width="4.8" stroke-linecap="round"/><path d="M368 248 L368 248" stroke="#6c7a36" stroke-width="4.8" stroke-linecap="round"/><path d="M300 450 Q268 350 258 262" stroke="#74803a" stroke-width="3.84" fill="none"/><path d="M291 420 L307 408" stroke="#74803a" stroke-width="4.8" stroke-linecap="round"/><path d="M291 420 L267 420" stroke="#74803a" stroke-width="4.8" stroke-linecap="round"/><path d="M286 404 L315 385" stroke="#74803a" stroke-width="4.8" stroke-linecap="round"/><path d="M286 404 L246 404" stroke="#74803a" stroke-width="4.8" stroke-linecap="round"/><path d="M282 390 L323 363" stroke="#74803a" stroke-width="4.8" stroke-linecap="round"/><path d="M282 390 L225 389" stroke="#74803a" stroke-width="4.8" stroke-linecap="round"/><path d="M279 375 L322 347" stroke="#74803a" stroke-width="4.8" stroke-linecap="round"/><path d="M279 375 L218 373" stroke="#74803a" stroke-width="4.8" stroke-linecap="round"/><path d="M275 360 L317 335" stroke="#74803a" stroke-width="4.8" stroke-linecap="round"/><path d="M275 360 L218 358" stroke="#74803a" stroke-width="4.8" stroke-linecap="round"/><path d="M272 346 L306 326" stroke="#74803a" stroke-width="4.8" stroke-linecap="round"/><path d="M272 346 L227 343" stroke="#74803a" stroke-width="4.8" stroke-linecap="round"/><path d="M269 331 L300 314" stroke="#74803a" stroke-width="4.8" stroke-linecap="round"/><path d="M269 331 L229 328" stroke="#74803a" stroke-width="4.8" stroke-linecap="round"/><path d="M266 317 L288 306" stroke="#74803a" stroke-width="4.8" stroke-linecap="round"/><path d="M266 317 L239 315" stroke="#74803a" stroke-width="4.8" stroke-linecap="round"/><path d="M264 303 L280 295" stroke="#74803a" stroke-width="4.8" stroke-linecap="round"/><path d="M264 303 L243 301" stroke="#74803a" stroke-width="4.8" stroke-linecap="round"/><path d="M262 289 L265 288" stroke="#74803a" stroke-width="4.8" stroke-linecap="round"/><path d="M262 289 L257 289" stroke="#74803a" stroke-width="4.8" stroke-linecap="round"/><path d="M260 276 L260 276" stroke="#74803a" stroke-width="4.8" stroke-linecap="round"/><path d="M260 276 L260 276" stroke="#74803a" stroke-width="4.8" stroke-linecap="round"/><path d="M305 460 Q390 420 452 480" stroke="#7a8440" stroke-width="3.5200000000000005" fill="none"/><path d="M331 450 L350 478" stroke="#7a8440" stroke-width="4.4" stroke-linecap="round"/><path d="M331 450 L338 438" stroke="#7a8440" stroke-width="4.4" stroke-linecap="round"/><path d="M343 447 L367 487" stroke="#7a8440" stroke-width="4.4" stroke-linecap="round"/><path d="M343 447 L355 432" stroke="#7a8440" stroke-width="4.4" stroke-linecap="round"/><path d="M355 445 L388 509" stroke="#7a8440" stroke-width="4.4" stroke-linecap="round"/><path d="M355 445 L378 424" stroke="#7a8440" stroke-width="4.4" stroke-linecap="round"/><path d="M367 444 L400 523" stroke="#7a8440" stroke-width="4.4" stroke-linecap="round"/><path d="M367 444 L398 423" stroke="#7a8440" stroke-width="4.4" stroke-linecap="round"/><path d="M379 444 L406 523" stroke="#7a8440" stroke-width="4.4" stroke-linecap="round"/><path d="M379 444 L414 427" stroke="#7a8440" stroke-width="4.4" stroke-linecap="round"/><path d="M390 446 L410 521" stroke="#7a8440" stroke-width="4.4" stroke-linecap="round"/><path d="M390 446 L426 434" stroke="#7a8440" stroke-width="4.4" stroke-linecap="round"/><path d="M401 449 L413 515" stroke="#7a8440" stroke-width="4.4" stroke-linecap="round"/><path d="M401 449 L436 442" stroke="#7a8440" stroke-width="4.4" stroke-linecap="round"/><path d="M412 453 L417 502" stroke="#7a8440" stroke-width="4.4" stroke-linecap="round"/><path d="M412 453 L439 450" stroke="#7a8440" stroke-width="4.4" stroke-linecap="round"/><path d="M422 458 L423 481" stroke="#7a8440" stroke-width="4.4" stroke-linecap="round"/><path d="M422 458 L436 458" stroke="#7a8440" stroke-width="4.4" stroke-linecap="round"/><path d="M432 464 L432 470" stroke="#7a8440" stroke-width="4.4" stroke-linecap="round"/><path d="M432 464 L436 464" stroke="#7a8440" stroke-width="4.4" stroke-linecap="round"/><path d="M442 471 L442 471" stroke="#7a8440" stroke-width="4.4" stroke-linecap="round"/><path d="M442 471 L442 471" stroke="#7a8440" stroke-width="4.4" stroke-linecap="round"/><path d="M290 470 Q235 450 190 520" stroke="#878c46" stroke-width="3.3600000000000003" fill="none"/><path d="M270 466 L260 457" stroke="#878c46" stroke-width="4.2" stroke-linecap="round"/><path d="M270 466 L257 494" stroke="#878c46" stroke-width="4.2" stroke-linecap="round"/><path d="M261 466 L242 457" stroke="#878c46" stroke-width="4.2" stroke-linecap="round"/><path d="M261 466 L247 507" stroke="#878c46" stroke-width="4.2" stroke-linecap="round"/><path d="M251 467 L223 460" stroke="#878c46" stroke-width="4.2" stroke-linecap="round"/><path d="M251 467 L239 524" stroke="#878c46" stroke-width="4.2" stroke-linecap="round"/><path d="M242 470 L209 467" stroke="#878c46" stroke-width="4.2" stroke-linecap="round"/><path d="M242 470 L235 530" stroke="#878c46" stroke-width="4.2" stroke-linecap="round"/><path d="M233 475 L193 477" stroke="#878c46" stroke-width="4.2" stroke-linecap="round"/><path d="M233 475 L231 541" stroke="#878c46" stroke-width="4.2" stroke-linecap="round"/><path d="M224 481 L187 487" stroke="#878c46" stroke-width="4.2" stroke-linecap="round"/><path d="M224 481 L227 540" stroke="#878c46" stroke-width="4.2" stroke-linecap="round"/><path d="M215 489 L194 494" stroke="#878c46" stroke-width="4.2" stroke-linecap="round"/><path d="M215 489 L219 520" stroke="#878c46" stroke-width="4.2" stroke-linecap="round"/><path d="M207 498 L197 501" stroke="#878c46" stroke-width="4.2" stroke-linecap="round"/><path d="M207 498 L209 512" stroke="#878c46" stroke-width="4.2" stroke-linecap="round"/><path d="M198 508 L198 508" stroke="#878c46" stroke-width="4.2" stroke-linecap="round"/><path d="M198 508 L198 508" stroke="#878c46" stroke-width="4.2" stroke-linecap="round"/><path d="M310 380 Q420 290 505 300" stroke="#848a44" stroke-width="3.5200000000000005" fill="none"/><path d="M339 358 L370 386" stroke="#848a44" stroke-width="4.4" stroke-linecap="round"/><path d="M339 358 L337 341" stroke="#848a44" stroke-width="4.4" stroke-linecap="round"/><path d="M353 348 L388 382" stroke="#848a44" stroke-width="4.4" stroke-linecap="round"/><path d="M353 348 L352 329" stroke="#848a44" stroke-width="4.4" stroke-linecap="round"/><path d="M367 339 L407 380" stroke="#848a44" stroke-width="4.4" stroke-linecap="round"/><path d="M367 339 L368 317" stroke="#848a44" stroke-width="4.4" stroke-linecap="round"/><path d="M381 331 L425 380" stroke="#848a44" stroke-width="4.4" stroke-linecap="round"/><path d="M381 331 L384 306" stroke="#848a44" stroke-width="4.4" stroke-linecap="round"/><path d="M394 324 L440 377" stroke="#848a44" stroke-width="4.4" stroke-linecap="round"/><path d="M394 324 L400 298" stroke="#848a44" stroke-width="4.4" stroke-linecap="round"/><path d="M407 318 L452 373" stroke="#848a44" stroke-width="4.4" stroke-linecap="round"/><path d="M407 318 L416 292" stroke="#848a44" stroke-width="4.4" stroke-linecap="round"/><path d="M420 312 L468 377" stroke="#848a44" stroke-width="4.4" stroke-linecap="round"/><path d="M420 312 L433 284" stroke="#848a44" stroke-width="4.4" stroke-linecap="round"/><path d="M433 308 L478 374" stroke="#848a44" stroke-width="4.4" stroke-linecap="round"/><path d="M433 308 L448 281" stroke="#848a44" stroke-width="4.4" stroke-linecap="round"/><path d="M446 304 L479 359" stroke="#848a44" stroke-width="4.4" stroke-linecap="round"/><path d="M446 304 L460 284" stroke="#848a44" stroke-width="4.4" stroke-linecap="round"/><path d="M458 302 L477 337" stroke="#848a44" stroke-width="4.4" stroke-linecap="round"/><path d="M458 302 L469 290" stroke="#848a44" stroke-width="4.4" stroke-linecap="round"/><path d="M470 300 L480 320" stroke="#848a44" stroke-width="4.4" stroke-linecap="round"/><path d="M470 300 L477 294" stroke="#848a44" stroke-width="4.4" stroke-linecap="round"/><path d="M482 299 L482 300" stroke="#848a44" stroke-width="4.4" stroke-linecap="round"/><path d="M482 299 L482 299" stroke="#848a44" stroke-width="4.4" stroke-linecap="round"/><path d="M494 299 L494 299" stroke="#848a44" stroke-width="4.4" stroke-linecap="round"/><path d="M494 299 L494 299" stroke="#848a44" stroke-width="4.4" stroke-linecap="round"/>
<path d="M250 603 H368 V640 C340 660 278 660 250 640Z" fill="#efece7"/>
<ellipse cx="309" cy="604" rx="59" ry="9" fill="#d8d2ca"/>
<ellipse cx="309" cy="604" rx="50" ry="6" fill="#8a6a50"/>
</g>
</g>
</g>
<!--P1-->
<g transform="translate(87,86)" clip-path="url(#c1)">
<g transform="scale(.3855)">
<g filter="url(#b3)">
<rect x="-10" y="-10" width="490" height="720" fill="#e9dbcf"/>
<rect x="395" y="-10" width="90" height="600" fill="#e4d0c2"/>
<!-- cloth -->
<path d="M-10 -10 H372 C392 40 402 120 400 200 C398 260 392 300 380 318 C366 326 352 322 346 306 L110 306 L-10 303 Z" fill="#c49d80"/>
<path d="M-10 40 C40 60 80 120 70 304 L30 304 C44 200 30 120 -10 90Z" fill="#b89073"/>
<path d="M120 -10 H340 C346 30 340 70 330 100 C280 60 200 40 130 70 C126 40 122 10 120 -10Z" fill="#c9a184"/>
<path d="M330 -10 C360 60 372 160 366 300 L386 310 C402 220 398 90 372 -10Z" fill="#b48b6f"/>
<path d="M-10 200 C20 220 50 250 60 305 L-10 303Z" fill="#bb9376"/>
<path d="M300 150 C320 190 336 240 346 300 C352 250 350 190 336 140Z" fill="#a97f63"/>
<!-- hair -->
<path d="M205 178 C170 182 148 204 132 246 C118 290 104 330 72 372 C100 366 124 350 142 330 L240 340 C246 390 262 440 300 492 C316 500 328 492 332 478 C330 420 326 350 316 290 C310 240 290 196 250 180 C236 176 220 176 205 178Z" fill="#3b2b23"/>
<path d="M262 330 C270 380 290 440 318 480 C312 420 306 360 296 310Z" fill="#4d3a2f"/>
<!-- neck & chest -->
<path d="M150 318 C146 350 120 372 84 378 C110 410 170 450 214 474 C232 448 244 420 250 396 C238 380 236 350 242 330Z" fill="#dcb38d"/>
<path d="M150 318 C170 350 200 372 244 380 L242 330Z" fill="#cc9c76"/>
<!-- face -->
<path d="M203 222 C222 196 262 192 284 214 C298 236 298 276 282 302 C266 326 240 336 220 326 C204 314 196 286 196 260 C196 246 198 232 203 222Z" fill="#deb58f"/>
<path d="M200 232 C214 200 256 186 288 216 C266 206 236 210 216 232 C208 242 204 252 200 262Z" fill="#33251e"/>
<ellipse cx="228" cy="262" rx="8" ry="3" fill="#5a3d2e" transform="rotate(-18 228 262)"/><ellipse cx="266" cy="250" rx="8" ry="3" fill="#5a3d2e" transform="rotate(-18 266 250)"/>
<path d="M244 304 C252 308 260 306 266 300" stroke="#b46a52" stroke-width="4" fill="none"/>
<!-- dress -->
<path d="M40 376 C56 370 72 370 86 374 C126 410 170 446 214 474 C228 452 242 424 250 400 C270 420 296 470 318 524 C336 560 348 596 344 622 C336 640 318 640 302 628 L300 710 H-10 V640 C0 560 10 470 26 400 C30 388 34 380 40 376Z" fill="#cd8653"/>
<path d="M26 400 C10 470 0 560 -10 640 L-10 710 H40 C30 620 36 500 60 390Z" fill="#bf7948"/>
<path d="M-10 626 C30 640 70 644 100 634 L104 656 C70 666 30 664 -10 650Z" fill="#b87143"/>
<path d="M6 656 C40 666 80 664 106 652 L130 710 H12Z" fill="#d9a67e"/>
<path d="M280 470 C306 500 330 560 344 622 C330 636 314 636 302 628 C306 570 298 520 280 470Z" fill="#bd7646"/>
<path d="M150 470 C180 500 200 560 196 700 L240 700 C244 600 236 520 214 474Z" fill="#d48e5a"/>
<!-- arm -->
<path d="M306 616 C330 604 352 588 372 560 C400 520 424 470 444 432 C452 420 462 414 475 416 L475 480 C456 520 424 580 384 630 C364 654 340 668 318 668 C306 656 302 636 306 616Z" fill="#dba97f"/>
<path d="M440 440 C444 420 456 410 475 412 L475 470 C460 468 446 458 440 440Z" fill="#d49f76"/>
</g>
<g filter="url(#b1z)"><g stroke-linecap="round" fill="none"><path d="M305 245 L352 108" stroke="#a9a83a" stroke-width="11.5"/><path d="M298 240 L330 98" stroke="#b3ae3e" stroke-width="11.5"/><path d="M288 232 L296 128" stroke="#9fa034" stroke-width="11.5"/><path d="M276 224 L262 66" stroke="#b8b242" stroke-width="11.5"/><path d="M262 216 L236 58" stroke="#a8a838" stroke-width="11.5"/><path d="M248 208 L214 50" stroke="#bdb444" stroke-width="11.5"/><path d="M232 200 L182 40" stroke="#b1ad3c" stroke-width="11.5"/><path d="M216 192 L152 52" stroke="#c2b548" stroke-width="11.5"/><path d="M200 184 L124 62" stroke="#b5ac3e" stroke-width="11.5"/><path d="M182 176 L96 72" stroke="#c7b24a" stroke-width="11.5"/><path d="M164 168 L62 92" stroke="#c4aa48" stroke-width="11.5"/><path d="M146 162 L30 104" stroke="#caa64a" stroke-width="11.5"/><path d="M128 157 L6 118" stroke="#cf9f4c" stroke-width="11.5"/><path d="M112 153 L2 134" stroke="#d6954c" stroke-width="11.5"/><path d="M98 152 L8 150" stroke="#d98c4a" stroke-width="11.5"/><path d="M90 154 L24 166" stroke="#d4874a" stroke-width="11.5"/><path d="M190 180 L78 64" stroke="#bfae42" stroke-width="11.5"/><path d="M172 172 L46 80" stroke="#c8a846" stroke-width="11.5"/><path d="M152 164 L16 92" stroke="#cca248" stroke-width="11.5"/><path d="M134 158 L0 106" stroke="#d39a4a" stroke-width="11.5"/><path d="M240 204 L198 46" stroke="#a5a436" stroke-width="11.5"/><path d="M270 220 L250 62" stroke="#b0ac3c" stroke-width="11.5"/><path d="M312 250 L344 150" stroke="#a2a236" stroke-width="11.5"/><path d="M0 132 C60 140 130 152 200 182 C250 204 280 226 304 246" stroke="#b9a23e" stroke-width="5"/><path d="M300 242 C340 282 400 340 470 412" stroke="#c5a545" stroke-width="6"/></g></g>
</g>
</g>
<!--P3-->
<g transform="translate(250,305.2)" clip-path="url(#c3)">
<g transform="scale(.2371)">
<g filter="url(#b3)">
<rect x="-10" y="-10" width="640" height="720" fill="#f5efe7"/>
<path d="M-10 -10 H200 C180 200 200 420 150 620 L-10 640Z" fill="#f8f3ec"/>
<path d="M200 -10 C190 200 210 400 170 600 L260 640 C250 400 240 200 260 -10Z" fill="#f1e9df"/>
<path d="M520 -10 H630 V160 C590 120 550 60 520 -10Z" fill="#eee3d9"/>
<!-- green bottom-left -->
<path d="M-10 636 C40 622 100 626 150 650 C180 664 200 684 210 710 H-10Z" fill="#70743a"/>
<path d="M120 640 C170 640 220 664 250 710 H150 C150 680 140 660 120 640Z" fill="#a8a271"/>
<!-- stool -->
<path d="M400 660 H630 V710 H400Z" fill="#cb8d62"/>
<path d="M284 540 C300 510 360 500 440 500 L630 520 V660 C560 676 460 676 380 650 C330 630 290 590 284 540Z" fill="#8b3f1c"/>
<path d="M288 528 C320 508 400 500 480 504 L630 520 V596 C540 610 420 600 340 574 C310 562 292 546 288 528Z" fill="#a04f26"/>
<path d="M340 560 C400 590 500 600 600 590" stroke="#c0703e" stroke-width="8" fill="none" opacity=".7"/>
<path d="M326 636 L318 710 H380 L372 650Z" fill="#bd6a34"/>
<!-- basket body -->
<path d="M196 270 C206 360 224 430 262 486 C300 530 380 556 470 560 C540 562 600 552 630 540 V280Z" fill="#c1955f"/>
<path d="M196 270 C204 340 216 400 240 450 C250 400 256 340 262 290Z" fill="#d3ab78"/>
<path d="M350 340 C380 330 420 340 440 360 C450 400 444 450 420 482 C390 490 360 470 346 440 C340 410 342 370 350 340Z" fill="#b08450"/>
<path d="M470 330 C520 340 580 336 630 326 V480 C580 490 520 490 470 480Z" fill="#c59a64"/>
<path d="M262 486 C300 530 380 556 470 560 C540 562 600 552 630 540 V510 C560 530 420 530 300 470Z" fill="#b38853"/>
<!-- back rim + back handle -->
<path d="M240 156 C300 134 420 130 500 140 C560 150 600 164 630 186 V240 C580 200 500 180 420 170 C360 164 300 168 250 184Z" fill="#c29a68"/>
<path d="M288 116 C320 108 360 110 396 122 L400 150 C360 140 320 138 286 146Z" fill="#c8a070"/>
<path d="M300 128 C330 122 360 124 388 132" stroke="#a8804f" stroke-width="6" fill="none"/>
<!-- interior -->
<path d="M246 186 C300 168 400 166 480 178 C540 190 600 212 630 242 V330 H300 C280 290 260 240 246 200Z" fill="#6e5038"/>
<path d="M440 214 C500 204 580 224 630 254 V320 C570 300 500 280 440 254Z" fill="#8a6a4a"/>
<!-- front handle -->
<path d="M408 276 C414 232 440 200 500 180 C540 170 580 170 612 178 L618 206 C580 196 540 198 506 210 C466 226 444 252 440 288Z" fill="#caa16d"/>
<path d="M414 262 L438 268 L436 296 L410 290Z" fill="#7b5a3c"/>
<!-- front fringe rim -->
<path d="M150 216 C160 180 200 158 252 152 C266 170 266 190 254 204 C300 240 380 262 470 268 C530 272 590 266 630 258 V340 C580 352 520 356 460 352 C370 346 280 326 206 286 C176 272 154 246 150 216Z" fill="#cca576"/>
<path d="M206 286 C280 326 370 346 460 352 C520 356 580 352 630 340 V360 C580 372 520 376 460 372 C370 366 280 346 210 306Z" fill="#b98e5c"/>
<path d="M150 216 C156 236 168 252 184 262 C176 240 176 214 186 190 C168 196 156 204 150 216Z" fill="#dcbc90"/>
<path d="M190 180 C210 170 232 164 250 162 C258 174 258 188 250 198 C230 192 208 186 190 180Z" fill="#d6b384"/>
</g>
</g>
</g>
<!--P4-->
<g transform="translate(411.7,189)" clip-path="url(#c4)">
<g transform="scale(.3135,.3108)">
<g filter="url(#b3)">
<rect x="-10" y="-10" width="490" height="720" fill="#d0cac2"/>
<path d="M-10 -10 H170 C150 200 160 450 110 710 H-10Z" fill="#d6d0c8"/>
<path d="M380 -10 H480 V260 C450 180 420 80 380 -10Z" fill="#cac4bc"/>
<!-- hair -->
<path d="M196 10 C230 -6 300 -4 350 36 C384 70 396 130 402 200 C410 250 436 300 476 330 V450 C460 470 444 474 436 466 C416 430 404 380 398 330 L330 280 L220 200 C196 180 176 150 164 110 C160 80 170 40 196 10Z" fill="#4a382d"/>
<path d="M400 240 C410 300 420 380 440 460 C452 420 450 340 430 280Z" fill="#66503f"/>
<path d="M180 20 C190 6 210 4 222 14 L214 40 L186 44Z" fill="#3d2e25"/>
<!-- neck / shoulder -->
<path d="M330 262 C350 266 380 250 398 232 C402 280 410 330 426 372 L360 384 C320 376 292 360 280 332 C300 320 322 296 330 262Z" fill="#d5a684"/>
<path d="M330 262 C350 290 376 300 400 296 L398 232 C380 250 350 266 330 262Z" fill="#c4926e"/>
<!-- face -->
<path d="M214 112 C236 70 300 50 350 76 C382 100 396 150 388 200 C380 240 356 266 326 272 C290 272 252 240 230 200 C214 170 208 138 214 112Z" fill="#dcb293"/>
<path d="M208 130 C216 70 290 36 356 74 C316 66 270 80 244 112 C230 130 222 150 220 176Z" fill="#3b2c24"/>
<ellipse cx="258" cy="182" rx="13" ry="5" fill="#4b3428" transform="rotate(-28 258 182)"/><ellipse cx="322" cy="128" rx="13" ry="5" fill="#4b3428" transform="rotate(-28 322 128)"/>
<path d="M330 222 C340 226 352 220 358 208" stroke="#b9705c" stroke-width="6" fill="none"/>
<path d="M286 170 C296 180 306 196 312 206" stroke="#c99a7a" stroke-width="5" fill="none"/>
<!-- green top -->
<path d="M191 418 C210 400 232 388 252 380 C290 370 330 366 362 366 C400 366 440 380 476 398 V710 H230 C180 690 136 660 122 610 C118 570 130 540 146 506 C170 490 190 474 196 458 C196 444 194 430 191 418Z" fill="#2d8244"/>
<path d="M400 600 C430 620 460 640 476 650 V710 H380 C390 670 396 640 400 600Z" fill="#1c5a2c"/>
<path d="M146 506 C130 540 118 570 122 610 C130 650 160 680 200 700 C176 640 176 560 206 486Z" fill="#226a38"/>
<path d="M250 420 C300 440 350 500 366 600 C330 540 290 480 236 452Z" fill="#3f9457"/>
<path d="M360 420 C410 440 450 500 460 600 L476 600 V410 C440 396 396 400 360 420Z" fill="#27703c"/>
<path d="M230 560 C270 580 300 620 310 690 L260 700 C256 650 246 600 230 560Z" fill="#1f6334"/>
<path d="M300 380 C340 372 400 378 440 396 C400 400 350 404 300 420Z" fill="#3a8d52"/>
<!-- jeans -->
<path d="M250 660 H404 V710 H250Z" fill="#8fa3b3"/>
<!-- bag -->
<path d="M37 414 C38 396 42 378 49 363 C56 350 66 340 76 331 L145 295 L232 240 C248 232 266 230 278 235 C284 242 288 250 292 258 L315 299 C328 318 344 336 356 350 L361 363 C330 362 290 368 251 377 C232 388 212 402 195 414 C180 420 162 424 145 428 L85 460 C70 462 56 458 49 451 C42 440 38 428 37 414Z" fill="#d3a77c"/>
<path d="M76 340 C130 308 200 268 276 246 L284 262 C210 284 140 324 86 360Z" fill="#bb8d62"/>
<path d="M110 372 C170 340 240 316 316 306 L324 322 C250 332 180 356 124 392Z" fill="#c7996e"/>
<path d="M60 420 C90 410 130 396 170 376" stroke="#c09268" stroke-width="10" fill="none"/>
<!-- hand -->
<path d="M99 392 C106 374 124 362 140 366 C150 380 150 400 146 420 C160 430 180 440 196 452 C200 470 200 490 196 506 L150 520 C146 500 138 480 126 462 C110 446 98 420 99 392Z" fill="#dcae8c"/>
<path d="M58 404 C68 394 84 392 96 398 L104 428 C90 436 72 432 62 420Z" fill="#d6a684"/>
<path d="M150 520 L196 506 C200 520 200 534 196 548 L160 540Z" fill="#d9aa88"/>
</g>
</g>
</g>
<!-- tape -->
<g filter="url(#b05)">
<path d="M135.300 75.300 L160 74.800 L190 75.500 L217.800 75.100 L218.400 80 L219 85.500 L218.600 94.700 L200 95 L166 94.800 L158.800 93.200 L141.400 91.200 L138.800 85.500 L135.300 78.300 Z" fill="#e1e3e1"/>
<path d="M136.500 77 C146 82 156 88 170 93.500" stroke="#f3f4f3" stroke-width="1.300" fill="none"/>
<path d="M172 80 C182 82.500 192 84 201 86.800" stroke="#f5f6f5" stroke-width="1.400" fill="none" stroke-linecap="round"/>
<path d="M138 79 L160 92 L142 91Z" fill="#d5d9d9" opacity=".7"/>
</g>
<!-- torn paper -->
<g filter="url(#b05)">
<path d="M419.300 165 L433.600 159.900 L447.300 155.300 L463.900 156.400 L464.400 173.600 L465 190.700 L462.100 199.900 L454.100 206.700 L439.300 211.300 L422.100 211.900 L419.900 206.700 L422.700 190.700 L423.900 179.300 L421 173.600 Z" fill="#ecebe8"/>
<path d="M421 173.600 C428 180 436 186 446 190.500 C452 193 458 196 462.100 198.700 L454.100 206.700 L439.300 211.300 L422.100 211.900 L419.900 206.700 L422.700 190.700 L423.900 179.300Z" fill="#f4f3f1"/>
<path d="M421 173.600 C428 180 436 186 446 190.500 C452 193 458 196 462.100 198.700" stroke="#d2d1ce" stroke-width="1.600" fill="none"/>
<path d="M423 196 L438 204 L436 211 L422.100 211.900 L419.900 206.700Z" fill="#e2e1de"/>
<path d="M447.300 155.300 L463.900 156.400 L464.400 173.600 C458 168 452 162 447.300 155.300Z" fill="#f1f0ee"/>
</g>
<!-- pin -->
<g filter="url(#b05)">
<circle cx="316" cy="306.500" r="11.200" fill="#a4a8ae"/>
<circle cx="315" cy="305.700" r="11.300" fill="#eeeff1"/>
<circle cx="313.500" cy="304.500" r="8" fill="#f3f4f5"/>
</g>
<!-- colour circles -->
<g filter="url(#b05)">
<path d="M591 218.800 C601 217.600 610.500 224.500 611.400 235.500 C612.300 247 605.500 256.800 594.500 258 C583.500 259 574.500 252 573.800 241 C573 229.500 580 220 591 218.800Z" fill="#d4a885"/>
<path d="M589 272 C600 270.600 609.800 277 611 287.600 C612 298.500 604.500 307 593.500 308 C582 309 573 302.500 572.200 291.600 C571.500 281 578.500 273.300 589 272Z" fill="#e59b63"/>
<path d="M590.500 319 C601 318 610.500 325 611.200 336 C612 347.500 605 357 594.500 357.800 C583.500 358.600 574.500 351.500 573.800 340 C573.200 329 580 320 590.500 319Z" fill="#3a8a40"/>
<path d="M594 367.600 C604.500 367.200 612 374.500 612.200 385 C612.400 396 605 404.400 594 405 C584 405.600 575.500 401.500 574.200 392 C573 381 582 368.200 594 367.600Z" fill="#a39a1d"/>
</g>
<!-- scribble ellipse -->
<g fill="none" stroke="#17120f" stroke-linecap="round">
<path d="M482.9 265.0 C479.3 265.4 468.3 265.5 461.4 267.1 C454.5 268.8 447.4 271.5 441.4 275.0 C435.5 278.5 429.5 283.3 425.7 287.9 C421.9 292.4 419.9 297.6 418.6 302.1 C417.3 306.7 416.7 310.5 417.9 315.0 C419.0 319.5 421.3 325.0 425.7 329.3 C430.1 333.6 437.4 338.0 444.3 340.7 C451.2 343.5 459.5 345.1 467.1 345.7 C474.8 346.3 482.9 346.1 490.0 344.3 C497.1 342.5 504.5 339.4 510.0 335.0 C515.5 330.6 520.2 323.8 522.9 317.9 C525.5 311.9 526.4 304.5 525.7 299.3 C525.0 294.0 522.4 290.2 518.6 286.4 C514.8 282.6 509.0 278.5 502.9 276.4 C496.7 274.4 488.8 273.5 481.4 274.3 C474.0 275.1 462.4 280.2 458.6 281.4" stroke-width="1.7"/>
<path d="M425.7 287.9 C424.5 290.2 419.9 297.6 418.6 302.1 C417.3 306.7 416.7 310.5 417.9 315.0 C419.0 319.5 421.3 325.0 425.7 329.3 C430.1 333.6 437.4 338.0 444.3 340.7 C451.2 343.5 463.3 344.9 467.1 345.7" stroke-width="2.6"/>
</g>
<!-- arrows -->
<g fill="none" stroke="#222" stroke-linecap="round" stroke-linejoin="round">
<path d="M416 102.7 C434 103 450 103.4 468.4 104.4 M460.4 98 L468.6 104.4 L460.8 111.2" stroke-width="1.7"/>
<path d="M180.2 307.3 L143.4 380.4 M139.4 370 L143 380.6 L152.6 371.8" stroke-width="1.1"/>
<path d="M472.9 358 L483.6 383.6 L492.8 432.6 M485.6 430.4 L493 433 L496.4 424.4" stroke-width="1.1" stroke="#333"/>
</g>
<!-- text -->
<g font-family="Liberation Sans, sans-serif" font-style="italic" fill="#2a2a2a" text-anchor="middle">
<text x="536" y="106" font-size="14.4" textLength="91" lengthAdjust="spacingAndGlyphs">Green Accents</text>
<text x="537.6" y="130.4" font-size="8.8" textLength="136" lengthAdjust="spacingAndGlyphs">Set off the warm palette with a</text>
<text x="537.2" y="144" font-size="8.8" textLength="101" lengthAdjust="spacingAndGlyphs">refreshing hint of green</text>
<text x="142.9" y="408.2" font-size="14.4" textLength="74.6" lengthAdjust="spacingAndGlyphs">Earth-tones</text>
<text x="142.9" y="429.4" font-size="8.8" textLength="130" lengthAdjust="spacingAndGlyphs">Warm shades that are pleasing</text>
<text x="142.9" y="443" font-size="8.8" textLength="47" lengthAdjust="spacingAndGlyphs">to the eyes</text>
<text x="501.6" y="454.6" font-size="8.8" textLength="133" lengthAdjust="spacingAndGlyphs">Natural textures to complement</text>
</g>

</symbol>
</defs>
</svg>

<!-- HEADER -->
<div id="hdr">
  <svg class="abs" style="left:11px;top:10.5px" width="6" height="10" viewBox="0 0 6 10"><path d="M4.6 1 L1.2 5 L4.6 9" fill="none" stroke="#fff" stroke-width="1.3" stroke-linecap="round" stroke-linejoin="round"/></svg>
  <div class="m" style="left:23px">Home</div>
  <div class="m" style="left:66px">File</div>
  <div class="m" style="left:100px">View</div>
  <div class="m" style="left:138px">Resize</div>
  <div class="m" style="left:180.5px;font-weight:normal;font-style:italic;font-size:7.7px;color:rgba(255,255,255,.36)">All changes saved</div>
  <div class="m" style="left:616px;font-size:7.6px;letter-spacing:0">Brown Orange and Green DIY Collage Color Inspiration Moo...</div>
  <div class="abs" style="left:851px;top:4px;width:38px;height:22px;border-radius:2px;background:rgba(255,255,255,.12)"></div>
  <div class="m" style="left:859px;font-size:7.8px">Share</div>
  <div class="abs" style="left:893px;top:4px;width:21px;height:22px;border-radius:2px;background:rgba(255,255,255,.12)"></div>
  <svg class="abs" style="left:898.6px;top:10px" width="10" height="11" viewBox="0 0 11 12"><path d="M5.5 1 V8 M2.5 5.2 L5.5 8.2 L8.5 5.2 M1.2 10.6 H9.8" fill="none" stroke="#fff" stroke-width="1.1" stroke-linecap="round" stroke-linejoin="round"/></svg>
  <div class="abs" style="left:918px;top:4px;width:76px;height:22px;border-radius:2px;background:#fff"></div>
  <svg class="abs" style="left:925px;top:9px" width="9" height="12" viewBox="0 0 9 12"><rect x="0.7" y="0.7" width="7.6" height="10.6" rx="1" fill="none" stroke="#1c2127" stroke-width="1.2"/><rect x="2.2" y="3" width="2.6" height="2.6" fill="#1c2127"/><rect x="4.2" y="6.4" width="2.6" height="2.6" fill="#1c2127"/></svg>
  <div class="m" style="left:939px;color:#1c2127;font-size:7.8px">Print Posters</div>
  <div class="abs" style="left:998px;top:4px;width:22px;height:22px;border-radius:2px;background:#fff"></div>
  <svg class="abs" style="left:1003px;top:13px" width="12" height="4" viewBox="0 0 12 4"><circle cx="2" cy="2" r="1.1" fill="#1c2127"/><circle cx="6" cy="2" r="1.1" fill="#1c2127"/><circle cx="10" cy="2" r="1.1" fill="#1c2127"/></svg>
</div>

<!-- RAIL -->
<div id="rail">
  <div class="abs" style="left:0;top:0;width:38px;height:38px;background:#282d36"></div>
    <div class="abs" style="left:0;top:38px;width:38px;height:6px;background:#282d36"></div>
  <div class="abs" style="left:0;top:38px;width:38px;height:12px;background:#10161e;border-top-right-radius:4px"></div>
  <!-- Templates -->
  <svg style="top:7.2px" viewBox="0 0 14 14"><rect x="2.4" y="2.5" width="9.2" height="9.2" rx="1" fill="none" stroke="#fff" stroke-width="1.1"/><path d="M7.4 2.5 V11.7 M7.4 6.8 H11.6" stroke="#fff" stroke-width="1.1"/></svg>
  <div class="lbl" style="top:21.7px;color:#fff">Templates</div>
  <!-- Uploads -->
  <svg style="top:45.6px" viewBox="0 0 14 14"><path d="M4.4 10.6 H3.6 a2.5 2.5 0 0 1 -.3 -5 a3.7 3.7 0 0 1 7.3 -.3 a2.7 2.7 0 0 1 -.2 5.3 H9.6" fill="none" stroke="#d5d7db" stroke-width="1" stroke-linecap="round"/><path d="M7 11.8 V6.6 M5.2 8.2 L7 6.4 L8.8 8.2" fill="none" stroke="#d5d7db" stroke-width="1" stroke-linecap="round" stroke-linejoin="round"/></svg>
  <div class="lbl" style="top:60.1px">Uploads</div>
  <!-- Photos -->
  <svg style="top:84px" viewBox="0 0 14 14"><rect x="2.4" y="2.2" width="9.2" height="9.6" rx="1" fill="none" stroke="#d5d7db" stroke-width="1"/><circle cx="5.2" cy="5.2" r="1" fill="#d5d7db"/><path d="M2.6 10.4 L5.4 7.6 L7.2 9.4 L9.2 7 L11.4 9.6" fill="none" stroke="#d5d7db" stroke-width="1" stroke-linejoin="round"/></svg>
  <div class="lbl" style="top:98.5px">Photos</div>
  <!-- Graphics -->
  <svg style="top:122.4px" viewBox="0 0 14 14"><circle cx="7" cy="7" r="5" fill="none" stroke="#d5d7db" stroke-width="1"/><circle cx="7" cy="7" r="1.6" fill="none" stroke="#d5d7db" stroke-width=".9"/><path d="M7 2 V5.4 M7 8.6 V12 M2.7 4.5 L5.6 6.2 M8.4 7.8 L11.3 9.5 M2.7 9.5 L5.6 7.8 M8.4 6.2 L11.3 4.5" stroke="#d5d7db" stroke-width=".9"/></svg>
  <div class="lbl" style="top:136.9px">Graphics</div>
  <!-- Text -->
  <svg style="top:160.8px" viewBox="0 0 14 14"><path d="M2.8 5 V2.8 H11.2 V5 M7 2.8 V11.4 M5.2 11.4 H8.8" fill="none" stroke="#d5d7db" stroke-width="1.2" stroke-linejoin="round"/></svg>
  <div class="lbl" style="top:175.3px">Text</div>
  <!-- Styles -->
  <svg style="top:199.2px" viewBox="0 0 14 14"><path d="M7 2.2 a4.9 4.9 0 1 0 0 9.8 c1.2 0 1.4 -.8 1 -1.5 c-.5 -.9 .1 -1.8 1.2 -1.8 h1 a1.8 1.8 0 0 0 1.8 -1.8 c0 -2.7 -2.2 -4.7 -5 -4.7 Z" fill="none" stroke="#d5d7db" stroke-width="1"/><circle cx="4.7" cy="6" r=".8" fill="#d5d7db"/><circle cx="6.6" cy="4.4" r=".8" fill="#d5d7db"/><circle cx="9.1" cy="5" r=".8" fill="#d5d7db"/><circle cx="15.9" cy="2.4" r="2.3" fill="#e0614a"/></svg>
  <div class="lbl" style="top:213.7px">Styles</div>
  <!-- Bkground -->
  <svg style="top:237.6px" viewBox="0 0 14 14"><defs><clipPath id="bkc"><rect x="2.2" y="2.2" width="9.6" height="9.6" rx="1"/></clipPath></defs><g clip-path="url(#bkc)" stroke="#d5d7db" stroke-width=".9"><path d="M-4 10 L10 -4 M-2 12 L12 -2 M0 14 L14 0 M2 16 L16 2 M4 18 L18 4 M-6 8 L8 -6 M-3 11 L11 -3 M-1 13 L13 -1 M1 15 L15 1 M3 17 L17 3"/></g></svg>
  <div class="lbl" style="top:252.1px">Bkground</div>
  <!-- Charts -->
  <svg style="top:276px" viewBox="0 0 14 14"><path d="M2.6 8 L5.6 5 L7.8 6.8 L11.4 3" fill="none" stroke="#d5d7db" stroke-width="1.1" stroke-linecap="round" stroke-linejoin="round"/><path d="M2.4 11 H11.6" stroke="#d5d7db" stroke-width="1.1" stroke-linecap="round"/></svg>
  <div class="lbl" style="top:290.5px">Charts</div>
  <!-- Logos -->
  <svg style="top:314.4px" viewBox="0 0 14 14"><circle cx="7" cy="7" r="5" fill="none" stroke="#d5d7db" stroke-width="1"/><text x="7" y="8.6" font-size="4.4" font-weight="bold" text-anchor="middle" font-family="Liberation Sans" fill="#d5d7db">CO.</text></svg>
  <div class="lbl" style="top:328.9px">Logos</div>
  <!-- Emoji -->
  <div class="abs" style="left:12.5px;top:353.5px;width:13px;height:13px;border-radius:1.5px;background:#2d7f97"></div>
  <div class="abs" style="left:16px;top:357.5px;width:6px;height:4.5px;border-radius:2px;background:#e9b949"></div>
  <div class="lbl" style="top:367.3px">Emoji</div>
  <!-- Folders -->
  <svg style="top:391.2px" viewBox="0 0 14 14"><path d="M2.2 4 a.8 .8 0 0 1 .8 -.8 H5.6 L6.8 4.6 H11 a.8 .8 0 0 1 .8 .8 V10.4 a.8 .8 0 0 1 -.8 .8 H3 a.8 .8 0 0 1 -.8 -.8 Z" fill="none" stroke="#d5d7db" stroke-width="1" stroke-linejoin="round"/></svg>
  <div class="lbl" style="top:405.7px">Folders</div>
  <!-- More -->
  <svg style="top:429.6px" viewBox="0 0 14 14"><circle cx="3.4" cy="7" r="1" fill="#d5d7db"/><circle cx="7" cy="7" r="1" fill="#d5d7db"/><circle cx="10.6" cy="7" r="1" fill="#d5d7db"/></svg>
  <div class="lbl" style="top:444.1px">More</div>

</div>

<!-- PANEL -->
<div id="panel">
  <div class="abs" style="left:13px;top:8px;width:166.5px;height:21.8px;border-radius:2px;background:#fff"></div>
  <svg class="abs" style="left:21px;top:13px" width="11" height="11" viewBox="0 0 11 11"><circle cx="4.4" cy="4.4" r="3.3" fill="none" stroke="#20252b" stroke-width="1.05"/><path d="M6.9 6.9 L9.8 9.8" stroke="#20252b" stroke-width="1.15" stroke-linecap="round"/></svg>
  <div class="abs" style="left:37px;top:14.2px;font-size:7.6px;color:#a6aab0;line-height:9px;white-space:nowrap">Search templates</div>
  <svg class="abs" style="left:163px;top:13px" width="11" height="11" viewBox="0 0 11 11"><path d="M0.8 2.6 H10.2 M0.8 5.5 H10.2 M0.8 8.4 H10.2" stroke="#20252b" stroke-width="1" stroke-linecap="round"/><circle cx="7" cy="2.6" r="1.2" fill="#fff" stroke="#20252b" stroke-width=".9"/><circle cx="3.6" cy="5.5" r="1.2" fill="#fff" stroke="#20252b" stroke-width=".9"/><circle cx="7" cy="8.4" r="1.2" fill="#fff" stroke="#20252b" stroke-width=".9"/></svg>
  <div class="sect" style="top:42.3px">Recently used</div>
<div class="th" style="left:13.0px;top:57.5px;background:#f6f6ef"><div style="position:absolute;left:0;top:0;width:79px;height:63px;"><svg style="position:absolute;left:0;top:0" width="79" height="63" viewBox="0 0 683 547"><use href="#art"/></svg></div></div>
<div class="sect" style="top:137.4px">For you</div>
<div class="see" style="top:137.4px">See all</div>
<div class="th" style="left:13.0px;top:152.6px;background:#fff"><div style="position:absolute;left:0;top:0;width:79px;height:63px;filter:blur(.35px);"><i style="left:0.7px;top:0.7px;width:25.3px;height:31.7px;background:linear-gradient(180deg,#c9c9c4,#a9aca4);"></i><i style="left:2px;top:12px;width:19px;height:20.4px;background:radial-gradient(ellipse at 45% 55%,#3f6243 0%,#5d7a58 45%,rgba(120,140,120,0) 75%);"></i><i style="left:27px;top:0.7px;width:25.3px;height:31.7px;background:linear-gradient(180deg,#a89782,#c2b39d);"></i><i style="left:30px;top:3px;width:20px;height:13px;background:radial-gradient(ellipse,#ddd2c2 0%,rgba(200,185,165,0) 70%);"></i><i style="left:53px;top:0.7px;width:25.3px;height:31.7px;background:linear-gradient(180deg,#d9d8d0 0,#d3d2ca 22%,#6d6f5e 30%,#777864 42%,#c4a475 50%,#cfb183 100%);"></i><i style="left:0.7px;top:33.2px;width:25.3px;height:29.1px;background:linear-gradient(180deg,#b9bbb7,#a6a9a7);"></i><i style="left:27px;top:33.2px;width:25.3px;height:29.1px;background:linear-gradient(180deg,#ece4d2 0,#d8bd88 35%,#cfae72 100%);"></i><i style="left:53px;top:33.2px;width:25.3px;height:29.1px;background:linear-gradient(160deg,#6a8388,#3f5a62);"></i><i style="left:20.3px;top:21.6px;width:38.7px;height:20.8px;background:#fff;"></i><i style="left:20.3px;top:25.6px;width:38.7px;text-align:center;font:bold 4.9px/6.4px 'Liberation Serif',serif;letter-spacing:.45px;color:#48676f;font-style:normal">FLOWERS<br>&amp; PLANTS</i></div></div>
<div class="th" style="left:96.3px;top:152.6px;background:#f2d6c9"><div style="position:absolute;left:0;top:0;width:79px;height:63px;filter:blur(.35px);"><i style="left:15px;top:7.5px;width:11.6px;height:23.2px;background:#f1e9e5;"></i><i style="left:26.6px;top:6.6px;width:11.6px;height:24.1px;background:#d8d3c8;"></i><i style="left:27px;top:17px;width:4px;height:7px;background:#e3c8a4;border-radius:50%"></i><i style="left:40.7px;top:8.3px;width:24.9px;height:22.4px;background:linear-gradient(180deg,#f7f1ec 0,#f1e6dc 35%,#d9c7b6 45%,#e6d9cc 60%,#efe6dd 100%);"></i><i style="left:49.8px;top:23px;width:5.0px;height:7.7px;background:#2e2624;border-radius:45% 45% 20% 20%"></i><i style="left:11.6px;top:34px;width:26.6px;height:20.8px;background:#f5ece3;"></i><i style="left:12.5px;top:36.5px;width:5.0px;height:5.5px;background:#e9b48e;border-radius:50%"></i><i style="left:28.2px;top:36.5px;width:10.0px;height:15.8px;background:#5e3b2b;border-radius:50% 40% 10% 30%"></i><i style="left:15px;top:49.5px;width:22px;height:3.0px;background:#7b5a48;"></i><i style="left:41.5px;top:34px;width:23.3px;height:23.3px;background:#f8f3ef;"></i><i style="left:42px;top:38px;width:20px;height:10px;background:#2f6c7d;border-radius:30% 60% 60% 40%;transform:rotate(12deg)"></i><i style="left:41.5px;top:36px;width:8.5px;height:6px;background:#e9d9cd;border-radius:50%"></i><i style="left:50px;top:46px;width:5px;height:11px;background:#f0d8c6;"></i><i style="left:62px;top:51px;width:4px;height:4px;background:#e8b59a;border-radius:50%"></i><i style="left:66px;top:0px;width:13px;height:63px;background:linear-gradient(90deg,rgba(60,50,50,0),rgba(60,50,50,.22) 60%,rgba(50,45,45,.5));"></i></div></div>
<svg class="chev" style="top:179.1px" viewBox="0 0 8 10"><path d="M2.4 1 L6 5 L2.4 9" fill="none" stroke="#fff" stroke-width="1.3" stroke-linecap="round" stroke-linejoin="round"/></svg>
<div class="sect" style="top:232.5px">Heart-Shaped Photo Collage</div>
<div class="see" style="top:232.5px">See all</div>
<div class="th" style="left:13.0px;top:247.7px;background:#f3d9cd"><div style="position:absolute;left:0;top:0;width:79px;height:63px;filter:blur(.35px);"><i style="left:15px;top:7.5px;width:11.6px;height:23.2px;background:#f1e9e5;"></i><i style="left:26.6px;top:6.6px;width:11.6px;height:24.1px;background:#d8d3c8;"></i><i style="left:27px;top:17px;width:4px;height:7px;background:#e3c8a4;border-radius:50%"></i><i style="left:40.7px;top:8.3px;width:24.9px;height:22.4px;background:linear-gradient(180deg,#f7f1ec 0,#f1e6dc 35%,#d9c7b6 45%,#e6d9cc 60%,#efe6dd 100%);"></i><i style="left:49.8px;top:23px;width:5.0px;height:7.7px;background:#2e2624;border-radius:45% 45% 20% 20%"></i><i style="left:11.6px;top:34px;width:26.6px;height:20.8px;background:#f5ece3;"></i><i style="left:12.5px;top:36.5px;width:5.0px;height:5.5px;background:#e9b48e;border-radius:50%"></i><i style="left:28.2px;top:36.5px;width:10.0px;height:15.8px;background:#5e3b2b;border-radius:50% 40% 10% 30%"></i><i style="left:15px;top:49.5px;width:22px;height:3.0px;background:#7b5a48;"></i><i style="left:41.5px;top:34px;width:23.3px;height:23.3px;background:#f8f3ef;"></i><i style="left:42px;top:38px;width:20px;height:10px;background:#2f6c7d;border-radius:30% 60% 60% 40%;transform:rotate(12deg)"></i><i style="left:41.5px;top:36px;width:8.5px;height:6px;background:#e9d9cd;border-radius:50%"></i><i style="left:50px;top:46px;width:5px;height:11px;background:#f0d8c6;"></i><i style="left:62px;top:51px;width:4px;height:4px;background:#e8b59a;border-radius:50%"></i></div></div>
<div class="th" style="left:96.3px;top:247.7px;background:#8d8f95"><div style="position:absolute;left:0;top:0;width:79px;height:63px;filter:blur(.35px);"><i style="left:0px;top:0px;width:45px;height:32px;background:#ebe5e1;"></i><i style="left:0px;top:32px;width:45px;height:31px;background:linear-gradient(180deg,#a3a5aa,#7c7e86 60%,#6a6c74);"></i><i style="left:45px;top:0px;width:34px;height:31px;background:linear-gradient(180deg,#c4bdb4,#a39c95);"></i><i style="left:3px;top:0px;width:18px;height:14px;background:#3a3b40;border-radius:30% 30% 40% 40%"></i><i style="left:17px;top:0px;width:4px;height:13px;background:#d69a55;"></i><i style="left:20px;top:0px;width:13px;height:17px;background:#2c292b;border-radius:20% 20% 40% 40%"></i><i style="left:33px;top:0px;width:7px;height:8px;background:#d9c8b5;"></i><i style="left:7px;top:32px;width:4.5px;height:22px;background:#3a4049;"></i><i style="left:13.5px;top:32px;width:5.0px;height:23px;background:#3a4049;"></i><i style="left:20px;top:32px;width:5px;height:20px;background:#23252a;"></i><i style="left:26px;top:32px;width:4px;height:22px;background:#23252a;"></i><i style="left:8px;top:52px;width:4px;height:4px;background:#2a2622;"></i><i style="left:15px;top:53px;width:4px;height:4px;background:#2a2622;"></i><i style="left:26px;top:52px;width:4px;height:4px;background:#6b4a32;"></i><i style="left:40px;top:30px;width:39px;height:33px;background:#4b3026;"></i><i style="left:42px;top:32px;width:21px;height:20px;background:#5e3a2c;border-radius:40%"></i><i style="left:55px;top:32px;width:24px;height:18px;background:#2b1c18;border-radius:50% 40% 20% 30%"></i><i style="left:60px;top:44px;width:19px;height:19px;background:#c58c6c;border-radius:50% 20% 0 30%"></i><i style="left:44px;top:52px;width:16px;height:11px;background:#d9cfc8;"></i><i style="left:62px;top:3px;width:12px;height:13px;background:#4a3b34;border-radius:40%;transform:rotate(30deg)"></i><i style="left:66px;top:0px;width:10px;height:5px;background:#2b2626;"></i><svg style="position:absolute;left:21px;top:5px" width="38" height="48" viewBox="0 0 38 48"><path d="M19 47 C15 36 3 26 1.5 14 C0.5 5 8 1 13 4 C16 6 18 10 19 14 C21 8 24 3 29 2 C35 1 38 8 35.5 17 C32 29 24 38 19 47Z" fill="#e3533c" transform="rotate(6 19 24)"/></svg><i style="left:37px;top:0px;width:3px;height:18px;background:#2e2a2c;transform:rotate(-8deg)"></i><i style="left:35px;top:24px;width:8px;height:1px;background:#f1a592;"></i><i style="left:36px;top:29px;width:6px;height:1px;background:#f1a592;"></i><i style="left:37px;top:34px;width:5px;height:1px;background:#f1a592;"></i></div></div>
<svg class="chev" style="top:274.2px" viewBox="0 0 8 10"><path d="M2.4 1 L6 5 L2.4 9" fill="none" stroke="#fff" stroke-width="1.3" stroke-linecap="round" stroke-linejoin="round"/></svg>
<div class="sect" style="top:327.6px">Mood Boards Photo Collage</div>
<div class="see" style="top:327.6px">See all</div>
<div class="th" style="left:13.0px;top:342.8px;background:#f5f2ef"><div style="position:absolute;left:0;top:0;width:79px;height:63px;filter:blur(.35px);"><i style="left:5px;top:5px;width:22px;height:6px;background:#f0b93f;border-radius:3px;transform:rotate(-4deg)"></i><i style="left:5px;top:10px;width:5px;height:10px;background:#f0b93f;border-radius:2px;transform:rotate(8deg)"></i><i style="left:12px;top:15px;width:28px;height:40px;background:#cbc7c3;"></i><i style="left:32px;top:33px;width:8px;height:22px;background:#9a8b82;"></i><i style="left:30px;top:16px;width:10px;height:14px;background:#b9b2ad;"></i><i style="left:11px;top:13px;width:18px;height:3.5px;background:#dfeaf2;"></i><i style="left:22px;top:22px;width:6px;height:6px;background:#3a2a24;border-radius:50%"></i><i style="left:22.5px;top:24px;width:5.0px;height:5.5px;background:#c99d83;border-radius:40%"></i><i style="left:19.5px;top:29px;width:11.5px;height:12px;background:#e9e6e3;border-radius:30% 30% 10% 10%"></i><i style="left:17px;top:38px;width:13px;height:12px;background:#3b3e44;border-radius:30%"></i><i style="left:5px;top:47px;width:8px;height:6px;background:#39aee0;border-radius:60% 20%;transform:rotate(-30deg)"></i><i style="left:10px;top:49px;width:11px;height:7px;background:#39aee0;border-radius:60% 20%;transform:rotate(-35deg)"></i><i style="left:17px;top:52px;width:10px;height:6px;background:#39aee0;border-radius:60% 20%;transform:rotate(-35deg)"></i><i style="left:46px;top:10px;width:20px;height:44px;background:#ece7e3;"></i><i style="left:48px;top:12px;width:14px;height:10px;background:#a6b3bc;border-radius:50% 50% 30% 30%"></i><i style="left:51.5px;top:17px;width:8.0px;height:9px;background:#d5ab90;border-radius:40%"></i><i style="left:48px;top:27px;width:16px;height:19px;background:#f1eeeb;border-radius:30% 30% 0 0"></i><i style="left:51px;top:44px;width:14px;height:10px;background:#7f9db8;"></i><i style="left:65px;top:10px;width:5.5px;height:4.5px;background:#f0c24a;border-radius:1px"></i><i style="left:65.5px;top:17px;width:3.5px;height:3px;background:#f3dfae;"></i><i style="left:65px;top:24px;width:5.5px;height:5px;background:#39aee0;"></i><i style="left:65.5px;top:31px;width:4.5px;height:4px;background:#c3e2f1;"></i><i style="left:58px;top:48px;width:15px;height:5px;background:#f0b93f;border-radius:50% 20%;transform:rotate(-18deg)"></i></div></div>
<div class="th" style="left:96.3px;top:342.8px;background:#b39c86"><div style="position:absolute;left:0;top:0;width:79px;height:63px;filter:blur(.35px);"><i style="left:5px;top:20px;width:8.5px;height:13px;background:#c56c30;"></i><i style="left:6px;top:33px;width:7px;height:8px;background:#b9622c;"></i><i style="left:58px;top:17px;width:16.5px;height:34px;background:#8a4322;"></i><i style="left:65px;top:22px;width:6px;height:5px;background:#c9855a;border-radius:40%"></i><i style="left:14px;top:9px;width:25.5px;height:37px;background:#efe9e3;"></i><i style="left:15px;top:10px;width:23.5px;height:27px;background:#2b2522;"></i><i style="left:19px;top:11px;width:17px;height:13px;background:#b9c3ca;border-radius:40% 40% 30% 30%"></i><i style="left:20px;top:21px;width:12px;height:12px;background:#c48863;border-radius:40%"></i><i style="left:17px;top:32px;width:21px;height:5px;background:#5a4a40;"></i><i style="left:15.5px;top:39px;width:22.5px;height:5px;background:#d8d2cc;"></i><i style="left:42px;top:6px;width:16px;height:24px;background:#efe9e3;"></i><i style="left:43px;top:7px;width:14px;height:21.5px;background:#2a2321;"></i><i style="left:45px;top:10px;width:11px;height:7px;background:#7d7f85;border-radius:40%"></i><i style="left:44px;top:16px;width:12px;height:11px;background:#cf976e;border-radius:45%"></i><i style="left:42px;top:32px;width:28.5px;height:25px;background:#f1ebe5;"></i><i style="left:43.5px;top:33.5px;width:25.5px;height:19.5px;background:#8a6a52;"></i><i style="left:43.5px;top:33.5px;width:5.5px;height:19.5px;background:#5b3a26;"></i><i style="left:49px;top:35px;width:9px;height:18px;background:#e3c9a4;border-radius:40% 40% 0 0"></i><i style="left:58px;top:44px;width:11px;height:9px;background:#a08468;"></i><i style="left:60px;top:35px;width:2px;height:12px;background:#c9b49a;"></i><i style="left:9px;top:49px;width:6px;height:6px;background:#c9b6a3;"></i><i style="left:19.5px;top:49px;width:6.5px;height:8px;background:#ebdfd3;"></i><i style="left:26.5px;top:49px;width:6.5px;height:8px;background:#c78a5e;"></i><i style="left:33.5px;top:49px;width:5.5px;height:8px;background:#8e4b27;"></i><i style="left:62px;top:0px;width:17px;height:63px;background:linear-gradient(90deg,rgba(50,40,35,0),rgba(50,40,35,.18) 55%,rgba(45,40,38,.5));"></i></div></div>
<svg class="chev" style="top:369.3px" viewBox="0 0 8 10"><path d="M2.4 1 L6 5 L2.4 9" fill="none" stroke="#fff" stroke-width="1.3" stroke-linecap="round" stroke-linejoin="round"/></svg>
<div class="sect" style="top:422.7px">Fashion Photo Collage</div>
<div class="see" style="top:422.7px">See all</div>
<div class="th" style="left:13.0px;top:437.9px;background:#f3eadc"><div style="position:absolute;left:0;top:0;width:79px;height:63px;filter:blur(.35px);"><i style="left:0.7px;top:0.7px;width:24.3px;height:33.3px;background:linear-gradient(180deg,#f1e9de 0,#efe3d2 45%,#d2b083 58%,#c39c6c 80%,#b98f60 100%);"></i><i style="left:2px;top:2px;width:12px;height:7px;background:#e0c8a6;border-radius:50%;transform:rotate(30deg)"></i><i style="left:14.5px;top:18px;width:5.0px;height:14px;background:#5b3f2e;border-radius:30%"></i><i style="left:26px;top:1px;width:26px;height:24px;background:linear-gradient(180deg,#efe5d6 0,#e6d5bd 25%,#a98661 50%,#8e6a48 80%,#a98661 100%);"></i><i style="left:28px;top:9px;width:19px;height:10px;background:#3f2d22;border-radius:50% 30% 40% 30%;transform:rotate(8deg)"></i><i style="left:53px;top:0.7px;width:25.3px;height:24.3px;background:#f0e7db;"></i><i style="left:54px;top:1px;width:18px;height:9px;background:#bf9e7c;border-radius:10% 60% 40% 50%;transform:rotate(10deg)"></i><i style="left:60px;top:14px;width:18px;height:11px;background:#cfa986;border-radius:50% 30% 0 0"></i><i style="left:26px;top:26px;width:9.5px;height:8px;background:#b78b67;"></i><i style="left:36px;top:26px;width:10px;height:8px;background:#e5c9a2;"></i><i style="left:46.5px;top:26px;width:9.5px;height:8px;background:#b98d6a;"></i><i style="left:56.5px;top:26px;width:10.5px;height:8px;background:#ead3a9;"></i><i style="left:67.5px;top:26px;width:10.8px;height:8px;background:#bb8f6c;"></i><i style="left:0.7px;top:35px;width:24.3px;height:27.3px;background:#f0e1c5;"></i><i style="left:5px;top:45px;width:17px;height:1px;background:#b99a6c;"></i><i style="left:4px;top:50px;width:15px;height:1px;background:#b99a6c;"></i><i style="left:26px;top:36px;width:26px;height:12px;background:linear-gradient(90deg,#e3e3e1,#d9dfe4 30%,#ecd7a6 60%,#e9e0d2);"></i><i style="left:29px;top:38px;width:11px;height:8px;background:#7fa0c0;border-radius:40%;opacity:.6"></i><i style="left:26px;top:49px;width:26px;height:13.3px;background:#f6efe6;"></i><i style="left:27px;top:53px;width:14px;height:9.3px;background:#e8c799;border-radius:50% 50% 0 0"></i><i style="left:53px;top:36px;width:25.3px;height:26.3px;background:linear-gradient(180deg,#f4f0ea 0,#efe7dc 40%,#a8703f 50%,#8c5a30 70%,#a06a3c 100%);"></i></div></div>
<div class="th" style="left:96.3px;top:437.9px;background:#fbf8f4"><div style="position:absolute;left:0;top:0;width:79px;height:63px;filter:blur(.35px);"><i style="left:0px;top:0px;width:34.5px;height:63px;background:#f3e6d8;"></i><i style="left:5px;top:7px;width:12px;height:1.5px;background:#4a3a30;"></i><i style="left:18px;top:7.2px;width:10px;height:1.1px;background:#c9a88a;"></i><i style="left:5px;top:14px;width:15px;height:0.8px;background:#d9c9b8;"></i><i style="left:5px;top:16px;width:12px;height:0.8px;background:#d9c9b8;"></i><i style="left:5px;top:18px;width:14px;height:0.8px;background:#d9c9b8;"></i><i style="left:5px;top:26px;width:24px;height:31.5px;background:#e3cfb2;"></i><i style="left:14px;top:29px;width:7px;height:11px;background:#7b5a40;border-radius:40% 40% 20% 20%"></i><i style="left:18px;top:27px;width:3px;height:9px;background:#8a684c;transform:rotate(20deg)"></i><i style="left:13.5px;top:38px;width:8.5px;height:12px;background:#6b4a33;"></i><i style="left:14px;top:47px;width:9px;height:10.5px;background:#8a5a30;"></i><i style="left:39px;top:4px;width:15px;height:23px;background:#f1efec;"></i><i style="left:41px;top:5px;width:1.5px;height:20px;background:#b9ab9c;"></i><i style="left:44px;top:5px;width:1px;height:17px;background:#cbbfb2;"></i><i style="left:46.5px;top:6px;width:1.5px;height:20px;background:#a89a8c;"></i><i style="left:50px;top:5px;width:1.5px;height:19px;background:#8fa0a8;"></i><i style="left:57px;top:8px;width:16px;height:19px;background:#f4efe9;"></i><i style="left:60px;top:11px;width:3px;height:10px;background:#8b5a3a;border-radius:30% 30% 0 0"></i><i style="left:63.5px;top:11px;width:3.0px;height:10px;background:#9a6843;border-radius:30% 30% 0 0"></i><i style="left:67px;top:11px;width:3px;height:10px;background:#7f4f30;border-radius:30% 30% 0 0"></i><i style="left:57.5px;top:22px;width:5.0px;height:5px;background:#c9a27c;border-radius:50%"></i><i style="left:64px;top:22px;width:5px;height:5px;background:#dcc0a0;border-radius:50%"></i><i style="left:39px;top:30px;width:35.5px;height:27.5px;background:linear-gradient(180deg,#efdcbd 0,#e6c79c 28%,#b5713f 45%,#a5612f 60%,#8e4e25 80%,#96562a 100%);"></i><i style="left:66px;top:0px;width:13px;height:63px;background:linear-gradient(90deg,rgba(50,45,45,0),rgba(50,45,45,.15) 55%,rgba(45,42,42,.5));"></i></div></div>
<svg class="chev" style="top:464.4px" viewBox="0 0 8 10"><path d="M2.4 1 L6 5 L2.4 9" fill="none" stroke="#fff" stroke-width="1.3" stroke-linecap="round" stroke-linejoin="round"/></svg>
<div class="sect" style="top:517.8px">Travel Photo Collage</div>
<div class="see" style="top:517.8px">See all</div>
<div class="th" style="left:13.0px;top:533.0px;background:#c9c9c6"><div style="position:absolute;left:0;top:0;width:79px;height:63px;filter:blur(.35px);"><i style="left:0px;top:0px;width:24px;height:19.3px;background:#34373b;"></i><i style="left:4px;top:3px;width:17px;height:10px;background:radial-gradient(ellipse,#e3e3e3 0,#b9b9bb 50%,rgba(80,80,85,0) 75%);"></i><i style="left:0px;top:20.8px;width:24px;height:42.2px;background:#1f1b18;"></i><i style="left:12px;top:28px;width:7px;height:19px;background:#a96c42;border-radius:40%;transform:rotate(12deg)"></i><i style="left:0px;top:41px;width:11px;height:16px;background:#a3683f;border-radius:40% 50% 40% 40%"></i><i style="left:14px;top:44px;width:10px;height:16px;background:#bb7b4a;border-radius:50% 0 0 50%"></i><i style="left:25px;top:0px;width:29px;height:43.5px;background:linear-gradient(180deg,#6c7650,#3f5a30 40%,#4a6636 100%);"></i><i style="left:28px;top:0px;width:23px;height:13px;background:#d6cdb9;border-radius:0 0 50% 50%"></i><i style="left:34px;top:10px;width:12px;height:24px;background:#cfc4ac;border-radius:30% 30% 50% 50%"></i><i style="left:36px;top:30px;width:10px;height:9px;background:#d2a98a;border-radius:50%"></i><i style="left:25px;top:45px;width:29px;height:18px;background:#474b4e;"></i><i style="left:31px;top:50px;width:17px;height:1.5px;background:#cfcfcf;"></i><i style="left:29px;top:53.5px;width:21px;height:2.5px;background:#e2e2e2;"></i><i style="left:32px;top:58px;width:15px;height:2px;background:#cfcfcf;"></i><i style="left:55px;top:0px;width:24px;height:19.3px;background:linear-gradient(180deg,#4d5252,#767a78);"></i><i style="left:58px;top:4px;width:16px;height:1.5px;background:#d5d5d5;"></i><i style="left:58px;top:8px;width:16px;height:1px;background:#bfc2c0;"></i><i style="left:55px;top:20.8px;width:24px;height:42.2px;background:linear-gradient(180deg,#8f9390 0,#787d7a 25%,#4f6a48 50%,#33582b 75%,#2d4f26 100%);"></i><i style="left:62px;top:21px;width:10px;height:3.5px;background:#dcdcd8;border-radius:0 0 50% 50%"></i><i style="left:67.5px;top:24px;width:3.5px;height:26px;background:linear-gradient(180deg,#e6e6e3,#c2cac3);border-radius:30%;transform:rotate(4deg)"></i></div></div>
<div class="th" style="left:96.3px;top:533.0px;background:#c4dde2"><div style="position:absolute;left:0;top:0;width:79px;height:63px;filter:blur(.35px);"><i style="left:0px;top:0px;width:26px;height:19.5px;background:#86a9ad;"></i><i style="left:27px;top:0px;width:25px;height:19.5px;background:#33788f;"></i><i style="left:53px;top:0px;width:26px;height:19.5px;background:#467f8c;"></i><i style="left:0px;top:20.5px;width:26px;height:21.5px;background:#3d7f95;"></i><i style="left:27px;top:20.5px;width:25px;height:21.5px;background:#4790a3;"></i><i style="left:53px;top:20.5px;width:26px;height:21.5px;background:#86a6a8;"></i><i style="left:0px;top:43px;width:26px;height:20px;background:#5a96a3;"></i><i style="left:27px;top:43px;width:25px;height:20px;background:#387f95;"></i><i style="left:53px;top:43px;width:26px;height:20px;background:#b5d4dc;"></i><i style="left:2px;top:3px;width:20px;height:7px;background:#e3bca9;border-radius:50%;transform:rotate(-28deg)"></i><i style="left:57px;top:22px;width:6px;height:16px;background:#dab7a8;border-radius:50%;transform:rotate(12deg)"></i><i style="left:33px;top:54px;width:16px;height:9px;background:#dba992;border-radius:50% 50% 0 0;transform:rotate(-15deg)"></i><i style="left:27px;top:43px;width:25px;height:7px;background:#2f7c95;"></i><i style="left:30px;top:28.5px;width:19px;height:1.5px;background:#e9f3f5;"></i><i style="left:30px;top:32px;width:19px;height:1.5px;background:#e9f3f5;"></i><i style="left:66px;top:48px;width:1px;height:12px;background:#9fc3cc;"></i><i style="left:62px;top:47px;width:9px;height:4px;background:#a9cad2;border-radius:50% 50% 0 0"></i><i style="left:66px;top:0px;width:13px;height:63px;background:linear-gradient(90deg,rgba(30,45,55,0),rgba(30,45,55,.15) 55%,rgba(35,42,50,.5));"></i></div></div>
<svg class="chev" style="top:559.5px" viewBox="0 0 8 10"><path d="M2.4 1 L6 5 L2.4 9" fill="none" stroke="#fff" stroke-width="1.3" stroke-linecap="round" stroke-linejoin="round"/></svg>
<div class="sect" style="top:612.9px">Art Photo Collage</div>
<div class="see" style="top:612.9px">See all</div>
<div class="th" style="left:13.0px;top:628.1px;background:#2a2d33"><div style="position:absolute;left:0;top:0;width:79px;height:63px;filter:blur(.35px);"><i style="left:0px;top:0px;width:40px;height:31px;background:#7a4e2a;"></i><i style="left:2px;top:2px;width:36px;height:27px;background:#2e2018;"></i><i style="left:19px;top:6px;width:2px;height:6px;background:#e9e2d8;"></i><i style="left:9px;top:17px;width:22px;height:2px;background:#e3dcd2;"></i><i style="left:6px;top:21px;width:28px;height:2.2px;background:#e3dcd2;"></i><i style="left:13px;top:25px;width:14px;height:1px;background:#a99a8a;"></i><i style="left:41.5px;top:4px;width:37.5px;height:27px;background:#2e3b46;"></i><i style="left:50px;top:6px;width:28px;height:24px;background:radial-gradient(ellipse at 45% 50%,#f0b860 0,#d98d3c 40%,#8a5a34 70%,rgba(46,59,70,0) 100%);"></i><i style="left:68px;top:9px;width:10px;height:13px;background:#e2c64a;border-radius:40%"></i><i style="left:54px;top:15px;width:10px;height:12px;background:#f1dcb8;border-radius:40%"></i><i style="left:0px;top:33px;width:24px;height:30px;background:#3b4148;"></i><i style="left:8px;top:36px;width:12px;height:27px;background:#4d545c;border-radius:50% 50% 0 0"></i><i style="left:26px;top:33px;width:28.5px;height:30px;background:#c9a23a;"></i><i style="left:30px;top:33px;width:22px;height:12px;background:#e8c84c;border-radius:40%"></i><i style="left:56px;top:33px;width:23px;height:30px;background:#454a51;"></i><i style="left:62px;top:37px;width:13px;height:26px;background:#b89a78;border-radius:50% 50% 0 0"></i></div></div>
<div class="th" style="left:96.3px;top:628.1px;background:#f4f4f2"><div style="position:absolute;left:0;top:0;width:79px;height:63px;filter:blur(.35px);"><i style="left:0px;top:0px;width:25px;height:21.5px;background:linear-gradient(180deg,#8d9193,#7d7a76);"></i><i style="left:2px;top:4px;width:23px;height:16px;background:#a87a55;border-radius:30% 0 0 60%"></i><i style="left:10px;top:5px;width:7px;height:7px;background:#33363a;border-radius:30%"></i><i style="left:0px;top:23px;width:25px;height:40px;background:#5b6f78;"></i><i style="left:9px;top:22px;width:16px;height:41px;background:#c9c0b2;border-radius:40% 0 0 0"></i><i style="left:26px;top:0px;width:26.5px;height:63px;background:#fdfdfc;"></i><i style="left:32px;top:6.5px;width:15px;height:1.1px;background:#6c8f9e;"></i><i style="left:26px;top:11px;width:26.5px;text-align:center;font:bold 4.4px/6px 'Liberation Sans',sans-serif;color:#4a8196;font-style:normal;letter-spacing:.1px">12 MERRY<br>BIRTHDAY<br>GIFT IDEAS</i><i style="left:29.5px;top:32px;width:20.5px;height:3.5px;background:#4a8196;"></i><i style="left:53px;top:0px;width:26px;height:63px;background:linear-gradient(180deg,#d2d2cf,#c2c2bf);"></i><i style="left:53px;top:6px;width:26px;height:1px;background:#a9a9a6;"></i><i style="left:53px;top:14px;width:26px;height:1px;background:#a9a9a6;"></i><i style="left:53px;top:22px;width:26px;height:1px;background:#a9a9a6;"></i><i style="left:58px;top:2px;width:8px;height:4px;background:#e8dccb;border-radius:40% 40% 0 0"></i><i style="left:58px;top:5px;width:8px;height:13px;background:#8a4826;border-radius:0 0 20% 20%"></i><i style="left:56px;top:18px;width:12px;height:2px;background:#2f2f33;"></i><i style="left:55px;top:24px;width:24px;height:39px;background:#d9ccb6;border-radius:40% 20% 0 0"></i></div></div>
<svg class="chev" style="top:654.6px" viewBox="0 0 8 10"><path d="M2.4 1 L6 5 L2.4 9" fill="none" stroke="#fff" stroke-width="1.3" stroke-linecap="round" stroke-linejoin="round"/></svg>
</div>

<!-- collapse handle -->
<svg class="abs" style="left:226px;top:342.5px" width="14" height="48" viewBox="0 0 14 48"><path d="M4 0 C4 6 13.3 6.5 13.3 13 V35 C13.3 41.500 4 42 4 48 H0 V0 Z" fill="#282d36"/><path d="M5.4 22.6 L3.4 24.7 L5.4 26.8" fill="none" stroke="#fff" stroke-width="1.1" stroke-linecap="round" stroke-linejoin="round"/></svg>

<!-- TOOLBAR -->
<div id="tool">
  <svg class="abs" style="left:8px;top:7px" width="12" height="12" viewBox="0 0 12 12"><circle cx="7" cy="4.6" r="3.6" fill="none" stroke="#20252b" stroke-width="1"/><path d="M3.6 5.2 A3.6 3.6 0 0 0 6 9.6 M1.6 7.4 A3.4 3.4 0 0 0 3.6 10.8" fill="none" stroke="#20252b" stroke-width=".9" stroke-linecap="round"/></svg>
  <div class="abs" style="left:24px;top:8.3px;font-size:7.8px;font-weight:bold;color:#1c2127;line-height:10px">Animate</div>
</div>

<!-- page top-right icons -->
<svg class="abs" style="left:938.4px;top:70.4px" width="9" height="10" viewBox="0 0 9 10"><rect x="2.6" y="2.8" width="5.2" height="6" rx=".9" fill="none" stroke="#50555c" stroke-width=".95"/><path d="M1 6.800 V1.600 a.8 .8 0 0 1 .8 -.8 H5.600" fill="none" stroke="#50555c" stroke-width=".95"/></svg>
<svg class="abs" style="left:957.6px;top:68.4px" width="9" height="11" viewBox="0 0 9 11"><path d="M3.800 3.400 H1.800 a.8 .8 0 0 0 -.8 .8 V9.200 a.8 .8 0 0 0 .8 .8 H6 a.8 .8 0 0 0 .8 -.8 V7.200" fill="none" stroke="#50555c" stroke-width=".95"/><path d="M6.400 .8 V5 M4.400 2.900 H8.400" stroke="#50555c" stroke-width=".95"/></svg>

<!-- PAGE -->
<div id="page">
<svg style="position:absolute;left:0;top:0" width="683" height="547" viewBox="0 0 683 547"><use href="#art"/></svg>
</div>

<div id="addp">+ Add page</div>

<!-- BOTTOM BAR -->
<div id="bot">
  <svg class="abs" style="left:7px;top:3.8px" width="12" height="13" viewBox="0 0 12 13"><rect x="1.6" y="1.8" width="9.4" height="10.4" rx="1.6" fill="none" stroke="#30353c" stroke-width="1.2"/><path d="M2.6 .9 H10" stroke="#30353c" stroke-width="1" stroke-linecap="round"/><text x="6.3" y="9.4" font-size="6" font-weight="bold" text-anchor="middle" font-family="Liberation Sans" fill="#20252b">1</text></svg>
  <svg class="abs" style="left:29.6px;top:6.2px" width="10" height="10" viewBox="0 0 10 10"><path d="M.8 2.2 a1.4 1.4 0 0 1 1.4 -1.4 H7.8 a1.4 1.4 0 0 1 1.4 1.4 V6 L6 9.2 H2.2 a1.4 1.4 0 0 1 -1.4 -1.4 Z M9.2 5.8 H7 a1 1 0 0 0 -1 1 V9.2" fill="none" stroke="#30353c" stroke-width="1.2" stroke-linejoin="round"/></svg>
  <div class="abs" style="left:649px;top:11.1px;width:51px;height:1.1px;background:#dcdee2"></div>
  <div class="abs" style="left:610px;top:11px;width:40px;height:1.4px;background:#20252b"></div>
  <div class="abs" style="left:646.2px;top:8.6px;width:6.2px;height:6.2px;border-radius:3.1px;background:#15191e"></div>
  <div class="abs" style="left:716.5px;top:6.8px;font-size:7.2px;font-weight:bold;color:#30353c;line-height:9px;letter-spacing:-.1px">136%</div>
  <svg class="abs" style="left:751px;top:7px" width="9" height="9" viewBox="0 0 9 9"><path d="M5.6 .8 H8.2 V3.4 M8.2 .8 L5.4 3.6 M3.4 8.2 H.8 V5.6 M.8 8.2 L3.6 5.4" fill="none" stroke="#20252b" stroke-width="1.2" stroke-linecap="round" stroke-linejoin="round"/></svg>
  <div class="abs" style="left:768px;top:3px;width:1px;height:15px;background:#e3e4e8"></div>
  <svg class="abs" style="left:776px;top:6.2px" width="11" height="11" viewBox="0 0 11 11"><circle cx="5.5" cy="5.5" r="4.5" fill="none" stroke="#20252b" stroke-width="1"/><text x="5.5" y="7.9" font-size="6.6" font-weight="bold" text-anchor="middle" font-family="Liberation Sans" fill="#20252b">?</text></svg>
</div>
</body>
</html>
